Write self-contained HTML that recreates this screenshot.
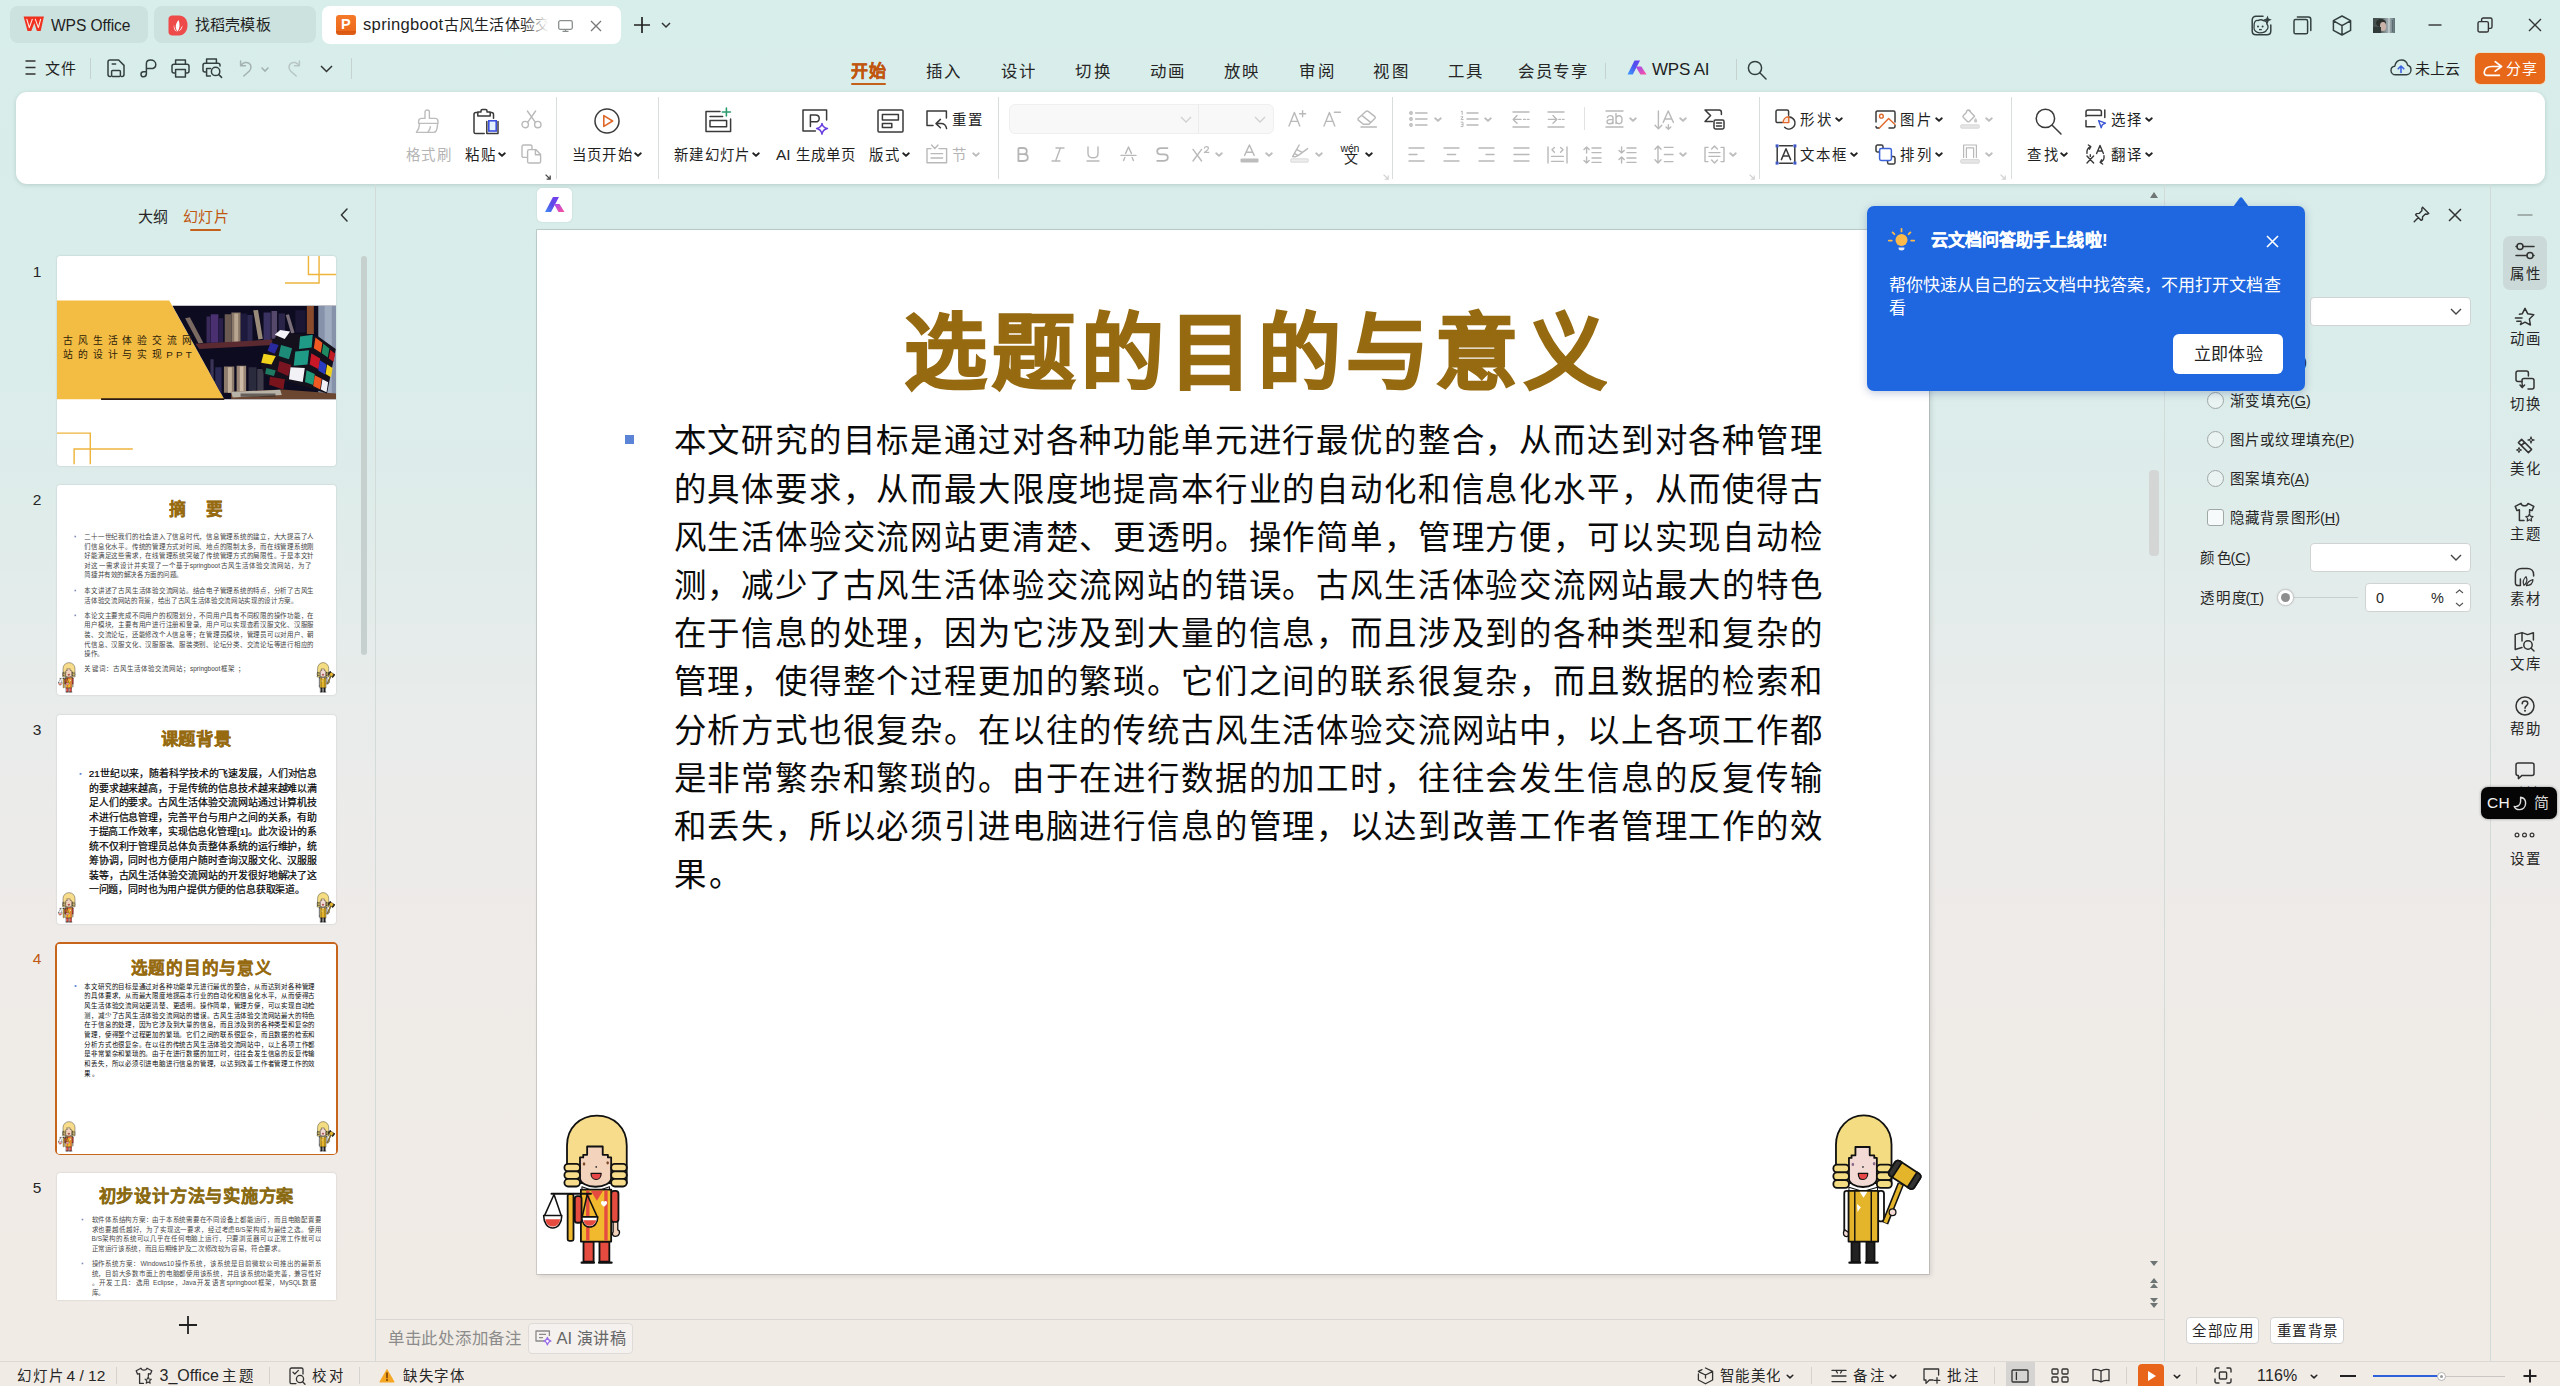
<!DOCTYPE html>
<html lang="zh-CN">
<head>
<meta charset="utf-8">
<title>springboot古风生活体验交流网站 - WPS Office</title>
<style>
*{box-sizing:border-box;margin:0;padding:0}
html,body{width:2560px;height:1386px;overflow:hidden}
body{font-family:"Liberation Sans",sans-serif;font-size:15px;color:#2a2a2a;position:relative;
background:linear-gradient(180deg,#d8eeeb 0%,#d9edea 22%,#deecea 36%,#e8eceb 50%,#edebe9 62%,#f0ebe6 85%,#f1ebe5 100%)}
.a{position:absolute}
.t{position:absolute;white-space:nowrap;line-height:1;overflow:visible}
.j{position:absolute;white-space:nowrap;overflow:hidden;text-align:justify;text-align-last:justify;text-justify:inter-character;line-height:1.2}
svg{position:absolute;overflow:visible}
.s{fill:none;stroke:#333;stroke-width:1.5;stroke-linecap:round;stroke-linejoin:round}
.g{fill:none;stroke:#b9b9b9;stroke-width:1.4;stroke-linecap:round;stroke-linejoin:round}
.sep{position:absolute;width:1px;background:#d9dddc}
.bt{left:136.5px;width:1148.5px;font-size:32.45px;line-height:48px;color:#0a0a0a}
.mt{top:59.5px;width:34.5px;font-size:16.45px;color:#262626;line-height:23px}
.th{left:57px;width:278.8px;height:209.5px;background:#fff;border-radius:3px;overflow:hidden;box-shadow:0 0 2px rgba(0,0,0,.18)}
.sl{position:absolute;left:0;top:0;width:1391px;height:1044px;transform:scale(.2006);transform-origin:0 0}
.tn{font-size:15.5px;color:#262626;width:10px;text-align:center;line-height:18px}
.t2{left:137px;width:1143px;font-size:32.45px;line-height:48px;color:#444}
.b2{left:87px;width:8px;height:8px;background:#7d8db5}
.t3{left:158px;width:1139px;font-size:49.45px;line-height:72px;color:#050505;font-weight:500;-webkit-text-stroke:1.1px #050505}
.t5{left:172px;width:1144px;font-size:32.45px;line-height:48px;color:#484848}
.cb{width:160.5px;height:28.5px;background:#fff;border:1px solid #cfd4d3;border-radius:4px}
.rd{width:17px;height:17px;border-radius:50%;background:rgba(255,255,255,.4);border:1.4px solid #a0a8a6}
.rp{font-size:14.45px;color:#262626;line-height:20px}
.bn{height:27px;background:#fff;border:1px solid #d2d2d2;border-radius:4px}
.sb{left:2510px;width:30px;font-size:14.45px;color:#262626;line-height:20px}
.st{top:1366px;font-size:14.45px;color:#262626;line-height:20px}
.cv{width:8px;height:5px}
.cv path{fill:none;stroke:#222;stroke-width:1.9;stroke-linecap:round;stroke-linejoin:round}
.cv.d path{stroke:#bdbdbd}
.rl{font-size:14.45px;color:#1f1f1f;line-height:20px}
.rl.d{color:#b4b4b4}
.d2{stroke:#3a3a3a!important}
</style>
</head>
<body>
<svg width="0" height="0" style="position:absolute;left:-10px;top:-10px"><defs>
<symbol id="ch1" viewBox="54 0 870 1386">
<g stroke="#111" stroke-width="14" stroke-linejoin="round" stroke-linecap="round">
<path d="M285 640 V350 C285 215 385 120 515 120 C645 120 745 215 745 350 V640Z" fill="#f6dc8b"/>
<path d="M440 358 H560 V422 H600 V442 H625 V600 C625 640 570 668 505 668 C440 668 385 640 385 600 V442 H410 V422 H440Z" fill="#f4d3bd"/>
<rect x="265" y="492" width="120" height="58" rx="28" fill="#f6dc8b"/><rect x="265" y="550" width="120" height="58" rx="28" fill="#f6dc8b"/><rect x="265" y="608" width="120" height="58" rx="28" fill="#f6dc8b"/>
<rect x="625" y="492" width="120" height="58" rx="28" fill="#f6dc8b"/><rect x="625" y="550" width="120" height="58" rx="28" fill="#f6dc8b"/><rect x="625" y="608" width="120" height="58" rx="28" fill="#f6dc8b"/>
<path d="M400 668 L505 705 L612 668 V695 H400Z" fill="#fff" stroke-width="8"/>
<rect x="625" y="700" width="56" height="240" rx="22" fill="#e54b3f"/>
<path d="M640 940 H676 V1000 C700 1010 690 1050 655 1050 C635 1050 630 1030 640 1015Z" fill="#f4d3bd" stroke-width="10"/>
<rect x="392" y="690" width="233" height="400" fill="#f0b92e"/>
<rect x="345" y="740" width="52" height="205" rx="20" fill="#e54b3f"/>
<rect x="412" y="1092" width="78" height="153" fill="#e54b3f"/><rect x="535" y="1092" width="76" height="153" fill="#e54b3f"/>
<path d="M398 1252 H492 M532 1252 H628" stroke-width="18"/>
<rect x="290" y="725" width="45" height="360" rx="12" fill="#f0b92e"/>
</g>
<rect x="432" y="698" width="26" height="385" fill="#e54b3f"/><rect x="572" y="698" width="26" height="385" fill="#e54b3f"/>
<path d="M468 698 H562 L515 775Z" fill="#e54b3f"/>
<path d="M570 822 C548 806 540 790 552 780 C560 774 568 778 570 786 C572 778 580 774 588 780 C600 790 592 806 570 822Z" fill="#fff"/>
<g stroke="#111" stroke-width="12" stroke-linejoin="round" stroke-linecap="round" fill="none">
<path d="M165 722 H470" stroke-width="14"/>
<path d="M185 728 L112 890 M185 728 L240 890 M440 728 L402 900 M440 728 L518 900"/>
<path d="M105 890 H245 C245 945 215 985 175 985 C135 985 105 945 105 890Z" fill="#fff"/>
<path d="M398 900 H522 C522 945 495 978 460 978 C425 978 398 945 398 900Z" fill="#fff"/>
</g>
<path d="M118 918 H232 C226 955 205 974 175 974 C145 974 124 955 118 918Z" fill="#e54b3f"/>
<path d="M410 925 H510 C504 952 486 968 460 968 C434 968 416 952 410 925Z" fill="#e54b3f"/>
<ellipse cx="416" cy="492" rx="10" ry="12" fill="#7a4a2a"/><ellipse cx="598" cy="484" rx="10" ry="12" fill="#7a4a2a"/><circle cx="510" cy="515" r="7" fill="#333"/>
<path d="M470 565 H548 C548 595 530 612 509 612 C488 612 470 595 470 565Z" fill="#e8474a" stroke="#111" stroke-width="9" stroke-linejoin="round"/>
</symbol>
<symbol id="ch2" viewBox="0 0 909 1386">
<g stroke="#111" stroke-width="14" stroke-linejoin="round" stroke-linecap="round">
<path d="M200 640 V345 C200 215 295 118 414 118 C533 118 628 215 628 345 V640Z" fill="#f3dc82"/>
<path d="M350 362 H460 V426 H495 V446 H515 V605 C515 640 470 670 408 670 C346 670 300 640 300 605 V446 H320 V426 H350Z" fill="#f3dad4"/>
<rect x="180" y="497" width="120" height="60" rx="28" fill="#f3dc82"/><rect x="180" y="557" width="120" height="60" rx="28" fill="#f3dc82"/><rect x="180" y="617" width="120" height="60" rx="28" fill="#f3dc82"/>
<rect x="515" y="497" width="115" height="60" rx="28" fill="#f3dc82"/><rect x="515" y="557" width="115" height="60" rx="28" fill="#f3dc82"/><rect x="515" y="617" width="115" height="60" rx="28" fill="#f3dc82"/>
<path d="M300 672 L408 705 L520 672 V700 H300Z" fill="#fff" stroke-width="8"/>
<rect x="264" y="700" width="40" height="345" rx="18" fill="#fff"/>
<path d="M268 1000 C250 1020 256 1052 282 1052 C296 1052 300 1040 298 1020Z" fill="#f3dad4" stroke-width="10"/>
<rect x="522" y="700" width="48" height="235" rx="20" fill="#fff"/>
<path d="M578 950 L700 645" stroke-width="52" stroke-linecap="butt"/>
<path d="M580 944 L698 651" stroke="#e4b42b" stroke-width="28" stroke-linecap="butt"/>
<circle cx="636" cy="865" r="26" fill="#f3dad4" stroke-width="10"/>
<g transform="rotate(33 730 575)"><rect x="615" y="508" width="230" height="136" rx="26" fill="#e4b42b"/><path d="M641 508 H660 V644 H641 C627 644 615 632 615 618 V534 C615 520 627 508 641 508Z M819 508 H800 V644 H819 C833 644 845 632 845 618 V534 C845 520 833 508 819 508Z" fill="#333"/></g>
<rect x="297" y="700" width="228" height="390" fill="#e4b42b"/>
<path d="M345 706 V1086 M472 706 V1086" stroke-width="11"/>
<rect x="320" y="1092" width="62" height="156" fill="#222"/><rect x="435" y="1092" width="62" height="156" fill="#222"/>
<path d="M304 1252 H386 M430 1252 H520" stroke-width="18"/>
</g>
<path d="M383 706 H442 L412 752Z" fill="#fff"/><path d="M362 800 L392 826 L366 862Z" fill="#fff"/>
<ellipse cx="330" cy="496" rx="10" ry="12" fill="#8a6a8a"/><ellipse cx="494" cy="490" rx="10" ry="12" fill="#8a6a8a"/><circle cx="408" cy="515" r="7" fill="#333"/>
<path d="M372 565 H445 C445 595 428 612 408 612 C388 612 372 595 372 565Z" fill="#e8474a" stroke="#111" stroke-width="9" stroke-linejoin="round"/>
</symbol>
</defs></svg>

<!-- title bar tabs -->
<div class="a" style="left:10px;top:6px;width:138px;height:37px;border-radius:8px;background:#cce2df"></div>
<svg width="22" height="16" viewBox="0 0 22 16" style="left:23px;top:16px"><path d="M0.6 0.5 H20.9 L17.7 14.9 H13.9 L11.3 6.9 L8.3 14.9 H4.5Z" fill="#f0311f"/><path d="M3.7 2.9 L6.3 11.6 L9.4 2.9 M12.2 2.9 L15.4 11.6 L17.7 2.9" fill="none" stroke="#ffe9e4" stroke-width="1.1" stroke-linejoin="round"/></svg>
<div class="t" style="left:51px;top:16px;font-size:15.6px;color:#1f1f1f;letter-spacing:-0.1px;line-height:20px">WPS Office</div>
<div class="a" style="left:154px;top:6px;width:162px;height:37px;border-radius:8px;background:#cce2df"></div>
<svg width="20" height="21" viewBox="0 0 20 21" style="left:168px;top:15px"><path d="M4.5 0.5 H11 C16 0.5 19.5 4.5 19.5 10 C19.5 16 16 20.5 11 20.5 H4.5 C2 20.5 0.5 19 0.5 17 V4 C0.5 2 2 0.5 4.5 0.5Z" fill="#ee4a4a"/><path d="M9.6 16.5 C7 13 7.2 9 10.6 5 C12 9 12 13 9.6 16.5Z M6 9.5 C6 12.5 7 14.8 9 16.6 C6.6 15.8 5.2 13.2 6 9.5Z M14.6 10.2 C14.2 13.4 12.8 15.4 10.4 16.6 C12 14.8 13.2 12.8 14.6 10.2Z" fill="#fff"/></svg>
<div class="j" style="left:195px;top:15px;width:75.5px;font-size:15px;color:#1f1f1f;line-height:20px">找稻壳模板</div>
<div class="a" style="left:322px;top:6px;width:299px;height:38px;border-radius:8px;background:#fff"></div>
<div class="a" style="left:336px;top:15px;width:20px;height:20px;border-radius:3px;background:linear-gradient(180deg,#f5792a 0%,#ee6a1c 78%,#d9560f 79%,#e0601a 100%)"></div>
<div class="t" style="left:341px;top:17px;font-size:14.5px;font-weight:bold;color:#fff;line-height:15px">P</div>
<div class="a" style="left:363px;top:15px;width:190px;height:20px;overflow:hidden">
<div class="t" style="left:0;top:0;font-size:16.6px;color:#1f1f1f;line-height:20px;letter-spacing:0.3px">springboot</div>
<div class="j" style="left:81px;top:0;width:136px;font-size:15px;color:#1f1f1f;line-height:20px">古风生活体验交流网</div>
<div class="a" style="left:160px;top:0;width:30px;height:20px;background:linear-gradient(90deg,rgba(255,255,255,0),#fff 85%)"></div>
</div>
<svg width="15" height="12" viewBox="0 0 15 12" style="left:557.5px;top:19.5px"><rect x="0.7" y="0.7" width="13.6" height="8.6" rx="1.5" fill="none" stroke="#8a8f8e" stroke-width="1.3"/><path d="M4.5 11.3 H10.5 M7.5 9.5 V11" stroke="#8a8f8e" stroke-width="1.3" fill="none"/></svg>
<svg width="12" height="12" viewBox="0 0 12 12" style="left:590px;top:19.5px"><path d="M1 1 L11 11 M11 1 L1 11" stroke="#777" stroke-width="1.3" fill="none"/></svg>
<svg width="18" height="18" viewBox="0 0 18 18" style="left:632.5px;top:16px"><path d="M9 1 V17 M1 9 H17" stroke="#222" stroke-width="1.7" fill="none"/></svg>
<svg width="10" height="6" viewBox="0 0 10 6" style="left:660.5px;top:22px"><path d="M1 1 L5 5 L9 1" stroke="#333" stroke-width="1.5" fill="none"/></svg>
<!-- window controls -->
<svg width="22" height="21" viewBox="0 0 22 21" style="left:2251px;top:15px"><path class="s" d="M12 1.2 H5 C2.8 1.2 1.2 2.8 1.2 5 V16 C1.2 18.2 2.8 19.8 5 19.8 H16 C18.2 19.8 19.8 18.2 19.8 16 V10" style="stroke:#34403f"/><path d="M16.5 0.5 L17.6 3.6 L20.8 4.8 L17.6 6 L16.5 9.2 L15.4 6 L12.2 4.8 L15.4 3.6Z" fill="#34403f"/><path class="s" d="M3.2 9 C3.2 6.5 5 5 7 5.6 C8.6 4.6 11 4.6 12.6 5.8 C14.6 5.4 16 7 15.8 9 C17.6 10.6 17.4 13.6 15.6 15 C14.4 17.6 10.6 17.8 8.8 17.8 C5.4 17.8 2.8 15.6 3 12.6Z" style="stroke:#34403f;stroke-width:1.3"/><circle cx="7" cy="11.6" r="1" fill="#34403f"/><circle cx="11.6" cy="11.6" r="1" fill="#34403f"/><path d="M8 14.6 H10.8" stroke="#34403f" stroke-width="1.3" fill="none"/></svg>
<svg width="19" height="19" viewBox="0 0 19 19" style="left:2292.5px;top:15.5px"><rect class="s" x="1" y="3.6" width="13.6" height="14.2" rx="1.6" style="stroke:#34403f"/><path class="s" d="M4.4 1 H15.4 C16.8 1 17.8 2 17.8 3.4 V14.6" style="stroke:#34403f"/></svg>
<svg width="20" height="21" viewBox="0 0 20 21" style="left:2332px;top:14.5px"><path class="s" d="M10 1 L18.6 5.6 V15.4 L10 20 L1.4 15.4 V5.6Z M1.6 5.8 L10 10.6 L18.4 5.8 M10 10.6 V19.8" style="stroke:#34403f"/></svg>
<div class="a" style="left:2372.8px;top:18.2px;width:22px;height:14.5px;overflow:hidden;background:linear-gradient(90deg,#414e4b 0%,#485552 28%,#66716f 42%,#8b979a 58%,#a4b0b4 72%,#7b8b90 88%,#5f7075 100%)">
<div class="a" style="left:3.5px;top:0.5px;width:10px;height:8px;border-radius:50%;background:#2b302d"></div>
<div class="a" style="left:7px;top:3.5px;width:6.5px;height:9px;border-radius:45%;background:#cbb2a9"></div>
<div class="a" style="left:0;top:9px;width:8px;height:6px;background:#2f3a38"></div>
<div class="a" style="left:15px;top:0;width:2px;height:14.5px;background:#c3cdd0;opacity:.7"></div>
<div class="a" style="left:19px;top:2px;width:1.5px;height:12px;background:#55656a;opacity:.8"></div>
</div>
<svg width="14" height="2" viewBox="0 0 14 2" style="left:2428px;top:23.5px"><path d="M0.5 1 H13.5" stroke="#333" stroke-width="1.4" fill="none"/></svg>
<svg width="16" height="16" viewBox="0 0 16 16" style="left:2476.5px;top:17px"><rect class="s" x="1" y="4.6" width="10.4" height="10.4" rx="1.6" style="stroke:#333;stroke-width:1.4"/><path class="s" d="M4.6 4.4 V2.6 C4.6 1.7 5.3 1 6.2 1 H13.4 C14.3 1 15 1.7 15 2.6 V9.8 C15 10.7 14.3 11.4 13.4 11.4 H11.6" style="stroke:#333;stroke-width:1.4"/></svg>
<svg width="14" height="14" viewBox="0 0 14 14" style="left:2528px;top:18.2px"><path d="M1 1 L13 13 M13 1 L1 13" stroke="#333" stroke-width="1.4" fill="none"/></svg>

<!-- menu row -->
<svg width="12" height="15" viewBox="0 0 12 15" style="left:24.5px;top:60px"><path d="M0.5 1 H10.5 M0.5 7.5 H10.5 M0.5 14 H10.5" stroke="#333" stroke-width="1.3" fill="none"/></svg>
<div class="j" style="left:45px;top:59px;width:30.5px;font-size:15px;color:#1f1f1f;line-height:20px">文件</div>
<div class="sep" style="left:90px;top:58px;height:21px;background:#c5d2d0"></div>
<svg width="18" height="19" viewBox="0 0 18 19" style="left:106.5px;top:58.5px"><path class="s" d="M3.6 17.6 H3 C1.8 17.6 1 16.8 1 15.6 V3 C1 1.8 1.8 1 3 1 H11.6 L17 6.4 V15.6 C17 16.8 16.2 17.6 15 17.6 H14.4 M5.2 5 H8.6" style="stroke:#34403f"/><rect class="s" x="4.6" y="11.6" width="8.8" height="6" rx="1" style="stroke:#34403f"/></svg>
<svg width="17" height="19" viewBox="0 0 17 19" style="left:139.5px;top:58.5px"><path class="s" d="M6.4 9.6 V4.6 C6.4 2.6 8 1 10.6 1 C13.6 1 15.8 2.8 15.8 5.4 C15.8 8 13.6 9.6 10.6 9.6 H6.4 M6.4 9.6 V14.6 C6.4 16.4 5.2 17.8 3.6 17.8 C2 17.8 1 16.6 1 15.2 C1 13.8 2 12.8 3.6 12.8 H6.4" style="stroke:#34403f"/></svg>
<svg width="19" height="19" viewBox="0 0 19 19" style="left:170.5px;top:58.5px"><path class="s" d="M4.6 5.2 V1 H14.4 V5.2 M4.4 14 H3 C1.8 14 1 13.2 1 12 V7.2 C1 6 1.8 5.2 3 5.2 H16 C17.2 5.2 18 6 18 7.2 V12 C18 13.2 17.2 14 16 14 H14.6 M4.6 10.6 H14.4 V18 H4.6Z" style="stroke:#34403f"/></svg>
<svg width="21" height="20" viewBox="0 0 21 20" style="left:201.5px;top:58px"><path class="s" d="M4.6 5.2 V1 H14.4 V5.2 M4.4 14 H3 C1.8 14 1 13.2 1 12 V7.2 C1 6 1.8 5.2 3 5.2 H16 C17.2 5.2 18 6 18 7.2 V8 M4.6 10.6 V18 H8.4 M4.6 10.6 H8.6" style="stroke:#34403f"/><circle class="s" cx="13.6" cy="13.4" r="4.2" style="stroke:#34403f"/><path class="s" d="M16.8 16.6 L19.6 19.4" style="stroke:#34403f"/></svg>
<svg width="14" height="18" viewBox="0 0 14 18" style="left:239px;top:59px"><path d="M1.6 2 V6.8 H6.4 M2 6.4 C4 3.4 7.4 2.6 9.8 4.2 C12.6 6 12.6 9.6 10.4 12 L4.8 17" fill="none" stroke="#a3b2b0" stroke-width="1.5" stroke-linecap="round" stroke-linejoin="round"/></svg>
<svg width="8" height="5" viewBox="0 0 8 5" style="left:261px;top:66.5px"><path d="M1 1 L4 4 L7 1" stroke="#a3b2b0" stroke-width="1.6" fill="none" stroke-linecap="round"/></svg>
<svg width="14" height="18" viewBox="0 0 14 18" style="left:287px;top:59px"><path d="M12.4 2 V6.8 H7.6 M12 6.4 C10 3.4 6.6 2.6 4.2 4.2 C1.4 6 1.4 9.6 3.6 12 L9.2 17" fill="none" stroke="#b7c5c3" stroke-width="1.5" stroke-linecap="round" stroke-linejoin="round"/></svg>
<svg width="13" height="8" viewBox="0 0 13 8" style="left:319.5px;top:65px"><path d="M1 1 L6.5 6.5 L12 1" stroke="#333" stroke-width="1.5" fill="none"/></svg>
<div class="sep" style="left:351px;top:58px;height:21px;background:#c5d2d0"></div>
<!-- tabs -->
<div class="j" style="left:851px;top:59.5px;width:35px;font-size:17px;font-weight:bold;color:#c0560f;line-height:23px;-webkit-text-stroke:.35px #c0560f">开始</div>
<div class="a" style="left:851px;top:82.5px;width:35px;height:2.5px;border-radius:1px;background:#c5601a"></div>
<div class="j mt" style="left:925.5px">插入</div>
<div class="j mt" style="left:1000.5px">设计</div>
<div class="j mt" style="left:1075px">切换</div>
<div class="j mt" style="left:1149.5px">动画</div>
<div class="j mt" style="left:1223.5px">放映</div>
<div class="j mt" style="left:1299px">审阅</div>
<div class="j mt" style="left:1373px">视图</div>
<div class="j mt" style="left:1447.5px">工具</div>
<div class="j mt" style="left:1518px;width:68.5px">会员专享</div>
<div class="sep" style="left:1605px;top:63px;height:16px;background:#c5d2d0"></div>
<svg width="20" height="15" viewBox="0 0 20 15" style="left:1626.5px;top:60px"><defs><linearGradient id="wa1" x1="0" y1="1" x2="1" y2="0"><stop offset="0" stop-color="#3aa0ff"/><stop offset=".55" stop-color="#4a55ee"/><stop offset="1" stop-color="#6a3df0"/></linearGradient><linearGradient id="wa2" x1="0" y1="0" x2="1" y2="1"><stop offset="0" stop-color="#9a4cf2"/><stop offset="1" stop-color="#ff4f9e"/></linearGradient></defs><path d="M0.5 14.5 L7.5 0.5 H13 L5.8 14.5Z" fill="url(#wa1)"/><path d="M8.6 6.6 H14.4 L19.5 14.5 H13.4Z" fill="url(#wa2)"/></svg>
<div class="t" style="left:1652px;top:58px;font-size:17px;color:#1f1f1f;line-height:23px;letter-spacing:-0.2px">WPS AI</div>
<div class="sep" style="left:1735.5px;top:59px;height:21px;background:#c5d2d0"></div>
<svg width="20" height="20" viewBox="0 0 20 20" style="left:1747px;top:59.5px"><circle class="s" cx="8" cy="8" r="6.6" style="stroke:#34403f"/><path class="s" d="M12.8 12.8 L19 19" style="stroke:#34403f"/></svg>
<!-- cloud + share -->
<svg width="22" height="17" viewBox="0 0 22 17" style="left:2389.5px;top:58.5px"><path class="s" d="M5.6 15.8 C2.8 15.8 1 13.8 1 11.4 C1 9 2.8 7.4 4.8 7.2 C5.4 3.6 8 1 11.4 1 C14.6 1 17 3.2 17.6 6.2 C19.8 6.8 21 8.6 21 10.8 C21 13.6 19 15.8 16.4 15.8Z" style="stroke:#34403f;stroke-width:1.4"/><path d="M11 13.4 V7.2 M8.2 9.8 L11 7 L13.8 9.8" stroke="#3d63e0" stroke-width="1.6" fill="none" stroke-linecap="round" stroke-linejoin="round"/></svg>
<div class="j" style="left:2414.5px;top:59px;width:45.5px;font-size:15px;color:#1f1f1f;line-height:20px">未上云</div>
<div class="a" style="left:2475px;top:52.5px;width:70px;height:31px;border-radius:5px;background:#e8681a;box-shadow:0 0 0 1px rgba(255,200,150,.35)"></div>
<svg width="20" height="17" viewBox="0 0 19 15" style="left:2483px;top:59.5px"><path d="M11.6 1 L17.6 5.6 L11.6 10 M17 5.6 H8.4 C4.4 5.6 1.6 7.6 1.2 11 C1 13 2.2 14 4 14 H15.6" stroke="#fff" stroke-width="1.6" fill="none" stroke-linecap="round" stroke-linejoin="round"/></svg>
<div class="j" style="left:2506px;top:59px;width:31px;font-size:15px;color:#fff;line-height:20px">分享</div>

<!-- ribbon -->
<div class="a" style="left:16px;top:92px;width:2528.5px;height:91.8px;border-radius:11px;background:#fff;box-shadow:0 1px 4px rgba(60,90,85,.22)"></div>
<!-- group: clipboard -->
<svg width="26" height="25" viewBox="0 0 26 25" style="left:414.5px;top:108.5px"><path class="g" d="M10 9.4 V3 C10 1.8 11 1 12.2 1 C13.6 1 14.4 1.8 14.4 3 V9.4 H20 C21.8 9.4 23 10.6 23 12.4 V14.4 H3.6 V12.4 C3.6 10.6 4.8 9.4 6.6 9.4Z M4.6 14.6 C4.4 18 3.4 21 1.4 23.4 H18.6 C21 23.4 22.4 20 22.6 14.6 M13 23 C14.4 21.4 15.2 19.6 15.4 17.6" style="stroke:#bdbdbd"/></svg>
<div class="j rl d" style="left:405.5px;top:145px;width:45.5px">格式刷</div>
<svg width="26" height="26" viewBox="0 0 26 26" style="left:473px;top:108.5px"><path class="s d2" d="M4.5 3.6 H3 C1.8 3.6 1 4.4 1 5.6 V23 C1 24 1.6 24.6 2.6 24.6 H11.2 M17.4 3.6 H18.6 C19.8 3.6 20.5 4.4 20.5 5.6 V9.2"/><path class="s d2" d="M4.8 3 H8 V1.8 C8 1 8.6 0.6 9.4 0.6 H12.6 C13.4 0.6 14 1 14 1.8 V3 H17.2 V7 H4.8Z"/><path class="s d2" d="M13.8 12.4 V24.6 H25 V12.4"/><rect x="15.8" y="11.8" width="7.4" height="10.2" fill="#e3f1ff" stroke="#3b4fe0" stroke-width="1.6"/></svg>
<div class="j rl" style="left:464.5px;top:145px;width:30.5px">粘贴</div>
<svg class="cv" viewBox="0 0 8 5" style="left:498px;top:152px"><path d="M1.2 1.3L4 3.9L6.8 1.3"/></svg>
<svg width="21" height="19" viewBox="0 0 21 19" style="left:520.5px;top:109.5px"><path class="g" d="M6.4 1 L14.4 12.4 M14.6 1 L6.6 12.4" /><circle class="g" cx="4.2" cy="14.6" r="3.2"/><circle class="g" cx="16.8" cy="14.6" r="3.2"/></svg>
<svg width="21" height="20" viewBox="0 0 21 20" style="left:520.5px;top:143.5px"><path class="g" d="M5.6 13.4 H2.6 C1.6 13.4 1 12.8 1 11.8 V2.6 C1 1.6 1.6 1 2.6 1 H9.4 C10.4 1 11 1.6 11 2.6 V5"/><path class="g" d="M8.2 5.6 H14.8 L19.6 10.4 V17.4 C19.6 18.4 19 19 18 19 H8.2 C7.2 19 6.6 18.4 6.6 17.4 V7.2 C6.6 6.2 7.2 5.6 8.2 5.6Z M14.4 5.8 V10.8 H19.4"/></svg>
<svg width="6" height="6" viewBox="0 0 6 6" style="left:544.5px;top:173.5px"><path d="M0.6 0.6 L5 5 M5.2 1.6 V5.2 H1.6" stroke="#4a4a4a" stroke-width="1.3" fill="none"/></svg>
<div class="sep" style="left:556px;top:97px;height:82px"></div>
<!-- group: slideshow -->
<svg width="26" height="26" viewBox="0 0 26 26" style="left:594px;top:107.5px"><circle class="s d2" cx="13" cy="13" r="12"/><path d="M9.8 7.6 L18.6 13 L9.8 18.4Z" fill="none" stroke="#e0682a" stroke-width="1.6" stroke-linejoin="round"/></svg>
<div class="j rl" style="left:571.5px;top:145px;width:60px">当页开始</div>
<svg class="cv" viewBox="0 0 8 5" style="left:634px;top:152px"><path d="M1.2 1.3L4 3.9L6.8 1.3"/></svg>
<div class="sep" style="left:658px;top:97px;height:82px"></div>
<!-- group: slides -->
<svg width="28" height="26" viewBox="0 0 28 26" style="left:704.5px;top:107px"><path class="s d2" d="M15 4.6 H1 V24.4 H25.6 V12"/><path class="s d2" d="M5 9.6 H17.6 M5 13.4 V19.8 H21.6 V13.4Z"/><path d="M21.4 1 V9 M17.4 5 H25.4" stroke="#2d9a6e" stroke-width="1.6" fill="none" stroke-linecap="round"/></svg>
<div class="j rl" style="left:674px;top:145px;width:75px">新建幻灯片</div>
<svg class="cv" viewBox="0 0 8 5" style="left:752px;top:152px"><path d="M1.2 1.3L4 3.9L6.8 1.3"/></svg>
<svg width="27" height="28" viewBox="0 0 27 28" style="left:802px;top:109px"><path class="s d2" d="M13.4 22 H1 V1 H24.6 V11"/><path class="s d2" d="M8.4 17.4 V6 H13.4 C15.8 6 17.2 7.4 17.2 9.4 C17.2 11.6 15.8 12.8 13.4 12.8 H8.4"/><path d="M20 14.4 C20.6 17.6 21.8 18.8 25.4 19.6 C21.8 20.4 20.6 21.6 20 25.2 C19.4 21.6 18.2 20.4 14.6 19.6 C18.2 18.8 19.4 17.6 20 14.4Z" fill="#fff" stroke="#6a3fe0" stroke-width="1.5" stroke-linejoin="round"/></svg>
<div class="t rl" style="left:776px;top:145px;font-size:15.5px">AI</div>
<div class="j rl" style="left:795.5px;top:145px;width:59.5px">生成单页</div>
<svg width="27" height="24" viewBox="0 0 27 24" style="left:876.5px;top:109px"><rect class="s d2" x="1" y="1" width="25" height="22" rx="1"/><rect class="s d2" x="5.4" y="5.6" width="16" height="5.4"/><rect class="s d2" x="5.4" y="14.4" width="9.4" height="4.2"/></svg>
<div class="j rl" style="left:868.5px;top:145px;width:30.5px">版式</div>
<svg class="cv" viewBox="0 0 8 5" style="left:902px;top:152px"><path d="M1.2 1.3L4 3.9L6.8 1.3"/></svg>
<svg width="22" height="20" viewBox="0 0 22 20" style="left:926px;top:109.5px"><path class="s d2" d="M7 15.6 H1 V1 H20.4 V8"/><path class="s d2" d="M14.4 9.4 L10 13.6 L14.4 17.8 M10.4 13.6 H15 C18 13.6 20 15.4 20.6 18.6"/></svg>
<div class="j rl" style="left:951.5px;top:109.5px;width:30.5px">重置</div>
<svg width="22" height="20" viewBox="0 0 22 20" style="left:926px;top:143.5px"><path class="g" d="M5.6 1 L8.8 4.4 L12 1 M5 4.6 H1 V18.8 H20.6 V4.6 H13"/><path class="g" d="M5 9.6 H16.6 M5 14 H16.6"/></svg>
<div class="j rl d" style="left:952px;top:145px;width:15px">节</div>
<svg class="cv d" viewBox="0 0 8 5" style="left:972px;top:152px"><path d="M1.2 1.3L4 3.9L6.8 1.3"/></svg>
<div class="sep" style="left:998px;top:97px;height:82px"></div>
<!-- group: font -->
<div class="a" style="left:1008.5px;top:104px;width:265px;height:30px;border-radius:6px;background:#f8f8f8;border:1px solid #efefef"></div>
<div class="a" style="left:1197.5px;top:105px;width:1px;height:28px;background:#ececec"></div>
<svg width="12" height="7" viewBox="0 0 12 7" style="left:1180px;top:115.5px"><path d="M1 1 L6 6 L11 1" stroke="#d0d0d0" stroke-width="1.3" fill="none"/></svg>
<svg width="12" height="7" viewBox="0 0 12 7" style="left:1254px;top:115.5px"><path d="M1 1 L6 6 L11 1" stroke="#d0d0d0" stroke-width="1.3" fill="none"/></svg>
<svg width="19" height="17" viewBox="0 0 19 17" style="left:1287.5px;top:110px"><path class="g" d="M1 16 L6.4 2.4 L11.8 16 M3 11.4 H9.8 M14.6 0.8 V6.8 M11.6 3.8 H17.6"/></svg>
<svg width="19" height="17" viewBox="0 0 19 17" style="left:1322.5px;top:110px"><path class="g" d="M1 16 L6.4 2.4 L11.8 16 M3 11.4 H9.8 M11.4 2.2 H17.4"/></svg>
<svg width="22" height="18" viewBox="0 0 22 18" style="left:1355.5px;top:110px"><path class="g" d="M12.2 1.4 L18.6 6.4 C19.4 7 19.4 8 18.8 8.6 L13 14.2 H7.4 L2.6 10.4 C1.8 9.8 1.8 8.8 2.4 8.2 L9.8 1.4 C10.6 0.8 11.4 0.8 12.2 1.4Z M5.8 5.4 L14.6 12.4 M5 17 H20.4"/></svg>
<svg width="12" height="15" viewBox="0 0 12 15" style="left:1016.5px;top:146.5px"><path d="M1.4 1 H6 C8.4 1 9.8 2.2 9.8 4.2 C9.8 6.2 8.4 7.2 6 7.2 H1.4 M1.4 7.2 H6.8 C9.2 7.2 10.8 8.4 10.8 10.6 C10.8 12.8 9.2 14 6.8 14 H1.4 V1" stroke="#b5b5b5" stroke-width="1.8" fill="none" stroke-linejoin="round"/></svg>
<svg width="14" height="15" viewBox="0 0 14 15" style="left:1050.5px;top:146.5px"><path class="g" d="M5 1 H13 M1 14 H9 M9.4 1 L4.6 14"/></svg>
<svg width="14" height="16" viewBox="0 0 14 16" style="left:1086px;top:146px"><path class="g" d="M2 1 V7.4 C2 10.2 4 11.8 7 11.8 C10 11.8 12 10.2 12 7.4 V1 M1 15 H13"/></svg>
<svg width="17" height="16" viewBox="0 0 17 16" style="left:1119.5px;top:146px"><path class="g" d="M3.6 14.6 L4.8 11.4 M12.2 11.4 L13.4 14.6 M5.6 7.4 L8.5 1 L11.4 7.4 M1 9.4 H16"/></svg>
<svg width="13" height="15" viewBox="0 0 13 15" style="left:1155.5px;top:146.5px"><path d="M11.4 1.2 H5 C2.6 1.2 1.2 2.4 1.2 4.2 C1.2 6.2 2.6 7.4 5 7.4 H8 C10.4 7.4 11.8 8.6 11.8 10.6 C11.8 12.6 10.4 13.8 8 13.8 H1.2" stroke="#b5b5b5" stroke-width="1.8" fill="none" stroke-linecap="round"/></svg>
<svg width="18" height="16" viewBox="0 0 18 16" style="left:1191.5px;top:145.5px"><path class="g" d="M1 3.4 L9.6 15 M9.6 3.4 L1 15"/><path class="g" d="M12.4 2.2 C12.6 1.2 13.4 0.7 14.4 0.7 C15.6 0.7 16.4 1.4 16.4 2.4 C16.4 3.6 15 4.4 12.4 6.4 H16.8" style="stroke-width:1.2"/></svg>
<svg class="cv d" viewBox="0 0 8 5" style="left:1215px;top:152px"><path d="M1.2 1.3L4 3.9L6.8 1.3"/></svg>
<svg width="19" height="19" viewBox="0 0 19 19" style="left:1240px;top:143.5px"><path class="g" d="M4.6 11.4 L9.4 1 L14.2 11.4 M6 8.2 H12.8"/><rect x="0.5" y="14.6" width="18" height="3.8" rx="1" fill="#bcbcbc"/></svg>
<svg class="cv d" viewBox="0 0 8 5" style="left:1265px;top:152px"><path d="M1.2 1.3L4 3.9L6.8 1.3"/></svg>
<svg width="19" height="19" viewBox="0 0 19 19" style="left:1289.5px;top:143.5px"><path class="g" d="M9.2 1 L4.4 9.4 L8 11.6 L17.6 4.6 M4.4 9.4 L2.6 12.6 L5 12.8 L8 11.6 M6.8 5.6 L12.4 8.4"/><rect x="0.7" y="14.8" width="17.6" height="3.4" rx="1" fill="#ededed" stroke="#d4d4d4" stroke-width=".8"/></svg>
<svg class="cv d" viewBox="0 0 8 5" style="left:1315px;top:152px"><path d="M1.2 1.3L4 3.9L6.8 1.3"/></svg>
<div class="t" style="left:1340.5px;top:142.5px;font-size:10.5px;color:#222;line-height:11px;letter-spacing:-.2px">wén</div>
<div class="t" style="left:1343.5px;top:151px;font-size:14px;color:#222;line-height:14px;width:14px;overflow:hidden">文</div>
<svg class="cv" viewBox="0 0 8 5" style="left:1365px;top:152px"><path d="M1.2 1.3L4 3.9L6.8 1.3"/></svg>
<svg width="6" height="6" viewBox="0 0 6 6" style="left:1382.5px;top:173.5px"><path d="M0.6 0.6 L5 5 M5.2 1.6 V5.2 H1.6" stroke="#cfcfcf" stroke-width="1.1" fill="none"/></svg>
<div class="sep" style="left:1392px;top:97px;height:82px"></div>
<!-- group: paragraph -->
<svg width="19" height="16" viewBox="0 0 19 16" style="left:1409px;top:111px"><circle class="g" cx="2" cy="2" r="1.2"/><circle class="g" cx="2" cy="8" r="1.2"/><circle class="g" cx="2" cy="14" r="1.2"/><path class="g" d="M6.6 2 H18 M6.6 8 H18 M6.6 14 H18"/></svg>
<svg class="cv d" viewBox="0 0 8 5" style="left:1434px;top:117px"><path d="M1.2 1.3L4 3.9L6.8 1.3"/></svg>
<svg width="19" height="18" viewBox="0 0 19 18" style="left:1459.5px;top:110px"><path class="g" d="M1.2 1.6 L2.2 1 V4.4 M1 6.8 H3 L1 9.6 H3.2 M1 12.2 H3 V14.4 H1.6 M3 14.4 V16.6 H1" style="stroke-width:1"/><path class="g" d="M7 3 H18 M7 9 H18 M7 15 H18"/></svg>
<svg class="cv d" viewBox="0 0 8 5" style="left:1484px;top:117px"><path d="M1.2 1.3L4 3.9L6.8 1.3"/></svg>
<svg width="18" height="17" viewBox="0 0 18 17" style="left:1512px;top:111px"><path class="g" d="M1 1 H17 M1 16 H17 M1.4 8.4 H9 M11.6 8.4 H13.4 M15.4 8.4 H17 M5 4.6 L1.2 8.4 L5 12.2"/></svg>
<svg width="18" height="17" viewBox="0 0 18 17" style="left:1547px;top:111px"><path class="g" d="M1 1 H17 M1 16 H17 M1.4 8.4 H9.6 M11.8 8.4 H13.6 M15.6 8.4 H17 M6 4.6 L9.8 8.4 L6 12.2"/></svg>
<div class="sep" style="left:1584px;top:107px;height:23px;background:#e2e2e2"></div>
<svg width="19" height="18" viewBox="0 0 19 18" style="left:1604.5px;top:110px"><path class="g" d="M1 1 H18 M1 17 H18"/><path class="g" d="M2.4 7.4 C3 6 4.2 5.6 5.4 5.6 C7 5.6 8 6.4 8 8 V13.6 M8 9.6 H5 C3.2 9.6 2 10.4 2 11.8 C2 13 3 13.8 4.6 13.8 C6.4 13.8 8 12.8 8 11"/><path class="g" d="M11 3.4 V13.6 M11 9.6 C11 7.2 12.2 5.8 14 5.8 C15.8 5.8 17 7.2 17 9.6 C17 12.2 15.8 13.8 14 13.8 C12.2 13.8 11 12.2 11 9.6"/></svg>
<svg class="cv d" viewBox="0 0 8 5" style="left:1629px;top:117px"><path d="M1.2 1.3L4 3.9L6.8 1.3"/></svg>
<svg width="21" height="20" viewBox="0 0 21 20" style="left:1653.5px;top:109.5px"><path class="g" d="M4.4 1 V18.6 M1 15.2 L4.4 18.8 L7.8 15.2 M9.2 12.4 L14.2 1 L19.4 12.4 M10.8 9 H17.8 M14.4 14.6 V19 M12 17 L14.4 19.2 L16.8 17"/></svg>
<svg class="cv d" viewBox="0 0 8 5" style="left:1679px;top:117px"><path d="M1.2 1.3L4 3.9L6.8 1.3"/></svg>
<svg width="21" height="21" viewBox="0 0 21 21" style="left:1703.5px;top:108.5px"><path class="s d2" d="M17.4 5.6 V3.4 C17.4 2 16.6 1 15.2 1 H1 L6.6 6.6 L1 12.4 H8.4"/><rect class="s d2" x="10" y="11" width="10" height="9" rx="1.4"/><path class="s d2" d="M12.4 14 H17.6 M12.4 17 H17.6" style="stroke-width:1.3"/></svg>
<svg width="17" height="15" viewBox="0 0 17 15" style="left:1408px;top:147px"><path class="g" d="M1 1 H16 M1 7.5 H9 M1 14 H16"/></svg>
<svg width="17" height="15" viewBox="0 0 17 15" style="left:1443px;top:147px"><path class="g" d="M1 1 H16 M4.4 7.5 H12.6 M1 14 H16"/></svg>
<svg width="17" height="15" viewBox="0 0 17 15" style="left:1478px;top:147px"><path class="g" d="M1 1 H16 M8 7.5 H16 M1 14 H16"/></svg>
<svg width="17" height="15" viewBox="0 0 17 15" style="left:1512.5px;top:147px"><path class="g" d="M1 1 H16 M1 7.5 H16 M1 14 H16"/></svg>
<svg width="21" height="18" viewBox="0 0 21 18" style="left:1547px;top:145.5px"><path class="g" d="M1 1 V17 M20 1 V17 M4.6 10.4 H16.4 M4.6 15.4 H16.4 M7.4 1.4 L5 3.8 L7.4 6.2 M13.6 1.4 L16 3.8 L13.6 6.2"/></svg>
<svg width="19" height="18" viewBox="0 0 19 18" style="left:1582.5px;top:145.5px"><path class="g" d="M3.6 1 V7 M1 3.4 L3.6 0.9 L6.2 3.4 M3.6 17 V11 M1 14.6 L3.6 17.1 L6.2 14.6 M9 2 H18 M9 6.6 H18 M9 12 H18 M9 16.4 H18"/></svg>
<svg width="19" height="18" viewBox="0 0 19 18" style="left:1617.5px;top:145.5px"><path class="g" d="M3.6 1 V7 M1 4.6 L3.6 7.1 L6.2 4.6 M3.6 17 V11 M1 13.4 L3.6 10.9 L6.2 13.4 M9 2 H18 M9 6.6 H18 M9 12 H18 M9 16.4 H18"/></svg>
<svg width="20" height="19" viewBox="0 0 20 19" style="left:1653.5px;top:145px"><path class="g" d="M4 1.2 V17.8 M1 4.2 L4 1 L7 4.2 M1 14.8 L4 18 L7 14.8 M10.4 2.4 H19 M10.4 9.5 H19 M10.4 16.6 H19"/></svg>
<svg class="cv d" viewBox="0 0 8 5" style="left:1679px;top:152px"><path d="M1.2 1.3L4 3.9L6.8 1.3"/></svg>
<svg width="21" height="19" viewBox="0 0 21 19" style="left:1703.5px;top:145px"><path class="g" d="M4 2.4 H1 V16.6 H4 M17 2.4 H20 V16.6 H17 M5 7.6 H16 M5 11.4 H16 M7.6 4 L10.5 1 L13.4 4 M7.6 15 L10.5 18 L13.4 15"/></svg>
<svg class="cv d" viewBox="0 0 8 5" style="left:1729px;top:152px"><path d="M1.2 1.3L4 3.9L6.8 1.3"/></svg>
<svg width="6" height="6" viewBox="0 0 6 6" style="left:1748.5px;top:173.5px"><path d="M0.6 0.6 L5 5 M5.2 1.6 V5.2 H1.6" stroke="#cfcfcf" stroke-width="1.1" fill="none"/></svg>
<div class="sep" style="left:1758.5px;top:97px;height:82px"></div>
<!-- group: drawing -->
<svg width="22" height="21" viewBox="0 0 22 21" style="left:1774.5px;top:108.5px"><path class="s d2" d="M7.4 13.6 H2.6 C1.6 13.6 1 13 1 12 V2.6 C1 1.6 1.6 1 2.6 1 H12 C13 1 13.6 1.6 13.6 2.6 V6.2"/><path class="s d2" d="M9.6 18.2 C11.4 20.2 14.6 20.6 17 19.2 C19.8 17.6 20.8 14.2 19.4 11.4 C18.4 9.4 16.6 8.2 14.4 8"/><path d="M13.8 7.8 C10.6 7.8 8.2 10.2 8 13.6 H13.8Z" fill="#fbe6dc" stroke="#e0682a" stroke-width="1.4" stroke-linejoin="round"/></svg>
<div class="j rl" style="left:1800px;top:109.5px;width:30.5px">形状</div>
<svg class="cv" viewBox="0 0 8 5" style="left:1835px;top:117px"><path d="M1.2 1.3L4 3.9L6.8 1.3"/></svg>
<svg width="21" height="19" viewBox="0 0 21 19" style="left:1874.5px;top:109.5px"><path class="s d2" d="M1 12 V2.4 C1 1.6 1.6 1 2.4 1 H18.6 C19.4 1 20 1.6 20 2.4 V12 M4 18 H2.4 C1.6 18 1 17.4 1 16.6 M14 18 H18.6 C19.4 18 20 17.4 20 16.6 V15.4"/><circle cx="6.4" cy="6.2" r="1.9" fill="none" stroke="#e0682a" stroke-width="1.4"/><path d="M4.4 18 L13.6 8.6 L20 14.6" fill="none" stroke="#e0682a" stroke-width="1.4" stroke-linejoin="round" stroke-linecap="round"/></svg>
<div class="j rl" style="left:1900px;top:109.5px;width:30.5px">图片</div>
<svg class="cv" viewBox="0 0 8 5" style="left:1934.5px;top:117px"><path d="M1.2 1.3L4 3.9L6.8 1.3"/></svg>
<svg width="20" height="20" viewBox="0 0 20 20" style="left:1959.5px;top:108.5px"><path class="g" d="M6.4 3.6 L3.4 6.6 C2.8 7.2 2.8 8 3.4 8.6 L7.4 12.4 C8 13 8.8 13 9.4 12.4 L14.6 7.2 L9 1.6 M6.4 3.6 C6.4 2 7.2 1 8.4 1 C9.6 1 10.4 2 10.4 3"/><path d="M15.6 8.8 C16.6 10.2 17.2 11.2 17.2 12 C17.2 13 16.5 13.6 15.6 13.6 C14.7 13.6 14 13 14 12 C14 11.2 14.6 10.2 15.6 8.8Z" fill="#c9c9c9"/><rect x="0.7" y="15.8" width="18.6" height="3.4" rx="1" fill="#e6e6e6" stroke="#d0d0d0" stroke-width=".8"/></svg>
<svg class="cv d" viewBox="0 0 8 5" style="left:1984.5px;top:117px"><path d="M1.2 1.3L4 3.9L6.8 1.3"/></svg>
<svg width="22" height="21" viewBox="0 0 22 21" style="left:1774.5px;top:143.5px"><path class="s d2" d="M2.2 3.6 V17.4 M19.8 3.6 V17.4 M4.6 1.8 H17.4 M4.6 19.2 H17.4"/><path class="s d2" d="M6.4 15.6 L11 4.8 L15.6 15.6 M8 12 H14"/><rect x="0.6" y="0.4" width="3" height="3" fill="#3d57c8"/><rect x="18.4" y="0.4" width="3" height="3" fill="#3d57c8"/><rect x="0.6" y="17.6" width="3" height="3" fill="#3d57c8"/><rect x="18.4" y="17.6" width="3" height="3" fill="#3d57c8"/></svg>
<div class="j rl" style="left:1800px;top:144.5px;width:45.5px">文本框</div>
<svg class="cv" viewBox="0 0 8 5" style="left:1850px;top:152px"><path d="M1.2 1.3L4 3.9L6.8 1.3"/></svg>
<svg width="21" height="21" viewBox="0 0 21 21" style="left:1874.5px;top:143.5px"><path class="s d2" d="M4.4 8 H2.6 C1.6 8 1 7.4 1 6.4 V2.6 C1 1.6 1.6 1 2.6 1 H6.4 C7.4 1 8 1.6 8 2.6 V4.4"/><path class="s d2" d="M16.4 12.6 H18.4 C19.4 12.6 20 13.2 20 14.2 V18.4 C20 19.4 19.4 20 18.4 20 H14.2 C13.2 20 12.6 19.4 12.6 18.4 V16.4"/><rect x="4.6" y="4.6" width="11.8" height="11.8" rx="1.6" fill="#fff" stroke="#3d63d8" stroke-width="1.5"/></svg>
<div class="j rl" style="left:1900px;top:144.5px;width:30.5px">排列</div>
<svg class="cv" viewBox="0 0 8 5" style="left:1934.5px;top:152px"><path d="M1.2 1.3L4 3.9L6.8 1.3"/></svg>
<svg width="20" height="20" viewBox="0 0 20 20" style="left:1959.5px;top:144px"><path class="g" d="M3.6 13.4 V1 H16.4 V13.4 M6.4 13.4 V3.8 H13.6 V13.4" style="stroke-width:1.2"/><rect x="0.7" y="15.6" width="18.6" height="3.6" rx="1" fill="#e6e6e6" stroke="#d0d0d0" stroke-width=".8"/></svg>
<svg class="cv d" viewBox="0 0 8 5" style="left:1984.5px;top:152px"><path d="M1.2 1.3L4 3.9L6.8 1.3"/></svg>
<svg width="6" height="6" viewBox="0 0 6 6" style="left:2000px;top:173.5px"><path d="M0.6 0.6 L5 5 M5.2 1.6 V5.2 H1.6" stroke="#cfcfcf" stroke-width="1.1" fill="none"/></svg>
<div class="sep" style="left:2010.5px;top:97px;height:82px"></div>
<!-- group: find -->
<svg width="27" height="27" viewBox="0 0 27 27" style="left:2034.5px;top:107.5px"><circle class="s d2" cx="10.4" cy="10.4" r="9.2"/><path class="s d2" d="M17.2 17.2 L26 26"/></svg>
<div class="j rl" style="left:2027px;top:144.5px;width:30.5px">查找</div>
<svg class="cv" viewBox="0 0 8 5" style="left:2060px;top:152px"><path d="M1.2 1.3L4 3.9L6.8 1.3"/></svg>
<svg width="22" height="21" viewBox="0 0 22 21" style="left:2084.5px;top:109px"><path class="s d2" d="M1 7.6 V3 C1 1.8 1.8 1 3 1 H14.4 C15.6 1 16.4 1.8 16.4 3 V6.4 H1 M19.8 1 V8.6 M1 11.4 V17.8 H10"/><path d="M13.6 11.6 L20.4 14.2 L17.4 15.6 L16.2 18.8Z" fill="#fff" stroke="#3d57d8" stroke-width="1.4" stroke-linejoin="round"/></svg>
<div class="j rl" style="left:2110.5px;top:109.5px;width:30.5px">选择</div>
<svg class="cv" viewBox="0 0 8 5" style="left:2145px;top:117px"><path d="M1.2 1.3L4 3.9L6.8 1.3"/></svg>
<svg width="21" height="21" viewBox="0 0 21 21" style="left:2085px;top:143.5px"><path class="s d2" d="M2 9.4 C1.6 6.4 2.8 3.8 5.6 2.6 M3.4 1 L5.8 2.6 L4.4 5.2 M19 11.6 C19.4 14.6 18.2 17.2 15.4 18.4 M17.6 20 L15.2 18.4 L16.6 15.8" style="stroke-width:1.4"/><path class="s d2" d="M11.6 9.6 L15 1.4 L18.4 9.6 M12.8 7 H17.2 M2 12 L8.6 19 M8.6 12 L2 19 M5.3 12.4 V10.8" style="stroke-width:1.4"/></svg>
<div class="j rl" style="left:2110.5px;top:144.5px;width:30.5px">翻译</div>
<svg class="cv" viewBox="0 0 8 5" style="left:2145px;top:152px"><path d="M1.2 1.3L4 3.9L6.8 1.3"/></svg>



<!-- left thumbnail panel -->
<div class="j" style="left:137.5px;top:206.5px;width:30.5px;font-size:15px;color:#262626;line-height:20px">大纲</div>
<div class="j" style="left:183px;top:206.5px;width:45.5px;font-size:15px;color:#c0560f;line-height:20px">幻灯片</div>
<div class="a" style="left:189.5px;top:229px;width:31.5px;height:2px;border-radius:1px;background:#c5601a"></div>
<svg width="8" height="14" viewBox="0 0 8 14" style="left:340px;top:208px"><path d="M7 1 L1.4 7 L7 13" stroke="#333" stroke-width="1.5" fill="none" stroke-linecap="round" stroke-linejoin="round"/></svg>
<div class="a" style="left:360.8px;top:256px;width:6.2px;height:399px;border-radius:3px;background:#c6d0cf"></div>
<div class="t tn" style="left:32px;top:262.5px">1</div>
<div class="t tn" style="left:32px;top:491px">2</div>
<div class="t tn" style="left:32px;top:721px">3</div>
<div class="t tn" style="left:32px;top:950px;color:#c0560f">4</div>
<div class="t tn" style="left:32px;top:1179px">5</div>
<div class="a th" style="top:256px"><div class="sl">
<svg width="1391" height="1038.5" viewBox="42 38 1760 1314" style="left:0;top:0">
<defs><clipPath id="phc"><path d="M770 352 H1802 V942 H1097Z"/></clipPath></defs>
<path d="M42 318 H750 L1097 942 H42Z" fill="#f3bd44"/>
<path d="M770 352 H1802 V942 H1097Z" fill="#0d0b20"/>
<path d="M320 936 H1097 V946 H320Z" fill="#2a1a10"/>
<g clip-path="url(#phc)">
<path d="M850 430 L880 425 L965 585 L935 590Z" fill="#7a6a62"/><path d="M985 420 H1010 V585 H985Z" fill="#3a2a5a"/><path d="M1012 405 H1060 V585 H1012Z" fill="#4a3070"/><path d="M1062 430 H1090 V585 H1062Z" fill="#2a1f4a"/>
<path d="M1100 405 H1140 V585 H1100Z" fill="#6a5a52"/><path d="M1142 395 H1200 V585 H1142Z" fill="#8a7868"/><path d="M1160 400 H1185 V585 H1160Z" fill="#b8a690"/><path d="M1202 400 H1240 V585 H1202Z" fill="#1e1a3e"/>
<path d="M1242 410 H1275 V585 H1242Z" fill="#2c2850"/><path d="M1280 380 L1310 378 L1340 560 L1312 565Z" fill="#9a8a7a"/><path d="M1345 395 H1390 V575 H1345Z" fill="#3a3260"/><path d="M1395 385 H1430 V560 H1395Z" fill="#55486a"/>
<path d="M1440 400 H1480 V540 H1440Z" fill="#2a2448"/><path d="M1485 410 L1505 405 L1540 520 L1520 530Z" fill="#7a6e78"/><path d="M1545 380 H1610 V520 H1545Z" fill="#1a1634"/>
<path d="M1618 352 H1662 V530 H1618Z" fill="#8a4a2c"/><path d="M1690 352 H1802 V942 H1690Z" fill="#8592aa"/><path d="M1730 352 H1775 V942 H1730Z" fill="#a9b6c8" opacity=".7"/>
<path d="M915 592 L1400 565 V600 L940 625Z" fill="#5a2a30"/>
<path d="M1010 690 H1030 V900 H1010Z" fill="#3a3458"/><path d="M1040 740 H1080 V900 H1040Z" fill="#2a2a55"/><path d="M1095 735 H1160 V900 H1095Z" fill="#8e7c6c"/><path d="M1120 740 H1145 V900 H1120Z" fill="#c2b09a"/>
<path d="M1175 730 H1235 V900 H1175Z" fill="#9a8676"/><path d="M1195 735 H1218 V900 H1195Z" fill="#cdbba6"/><path d="M1250 740 H1300 V900 H1250Z" fill="#2b2b3e"/><path d="M1305 750 H1345 V900 H1305Z" fill="#3d3a4a"/>
<path d="M1140 895 L1460 880 L1802 905 V942 H1140Z" fill="#6b4630"/><path d="M1140 895 L1450 882 L1460 915 L1150 930Z" fill="#b9b2a6"/><path d="M1200 905 H1420 V925 H1200Z" fill="#2e2a2a" opacity=".6"/>
</g>
<g>
<path d="M1325 715 L1440 515 L1690 545 L1800 625 L1745 905 L1500 830 L1350 790Z" fill="#14101c"/>
<path d="M1415 535 L1450 505 L1512 515 L1478 562Z" fill="#f4f4f8"/>
<path d="M1390 585 L1440 600 L1415 655 L1370 635Z" fill="#2a2aa0"/><path d="M1455 600 L1525 620 L1505 690 L1440 668Z" fill="#1d8a78"/>
<path d="M1345 655 L1422 668 L1395 722 L1330 712Z" fill="#f1d31e"/><path d="M1445 700 L1520 725 L1500 795 L1432 765Z" fill="#7a1420"/>
<path d="M1362 745 L1422 760 L1410 795 L1355 780Z" fill="#1f7a62"/><path d="M1385 800 L1480 815 L1470 880 L1380 850Z" fill="#7a141c"/>
<path d="M1575 545 L1655 535 L1648 615 L1568 625Z" fill="#1f9a86"/><path d="M1672 552 L1716 585 L1706 648 L1662 620Z" fill="#f05a22"/><path d="M1722 592 L1760 622 L1750 678 L1712 652Z" fill="#1f8a62"/><path d="M1766 630 L1796 655 L1786 705 L1756 685Z" fill="#c01a22"/>
<path d="M1545 640 L1632 632 L1622 722 L1535 730Z" fill="#1f9a86"/><path d="M1646 652 L1702 685 L1692 752 L1636 722Z" fill="#c81828"/><path d="M1700 695 L1742 722 L1732 785 L1690 760Z" fill="#2a3cc0"/><path d="M1746 722 L1780 745 L1770 802 L1736 782Z" fill="#f0d21e"/>
<path d="M1515 740 L1605 745 L1592 832 L1505 815Z" fill="#f2f2f6"/><path d="M1616 758 L1668 782 L1658 852 L1606 832Z" fill="#1f9a7a"/><path d="M1668 790 L1712 812 L1702 880 L1658 858Z" fill="#f05a22"/><path d="M1716 815 L1752 835 L1742 897 L1706 880Z" fill="#f2f2f6"/>
</g>
<path d="M1628 38 V155 H1802 M1695 38 V208 H1480" fill="none" stroke="#eeb43c" stroke-width="9"/>
<path d="M42 1155 H252 V1352 M520 1255 H150 V1352" fill="none" stroke="#eeb43c" stroke-width="9"/>
</svg>
<div class="j" style="left:30px;top:392px;width:642px;font-size:49px;color:#2e2108;line-height:60px">古风生活体验交流网</div>
<div class="j" style="left:30px;top:461px;width:493px;font-size:49px;color:#2e2108;line-height:60px">站的设计与实现</div>
<div class="t" style="left:545px;top:461px;font-size:49px;color:#2e2108;line-height:60px;letter-spacing:16px">PPT</div>

</div></div>
<div class="a th" style="top:485px"><div class="sl">
<div class="t" style="left:559px;top:70px;font-size:84px;font-weight:bold;color:#966a10;line-height:100px;-webkit-text-stroke:2.4px #966a10;width:84px;overflow:hidden">摘</div>
<div class="t" style="left:741px;top:70px;font-size:84px;font-weight:bold;color:#966a10;line-height:100px;-webkit-text-stroke:2.4px #966a10;width:84px;overflow:hidden">要</div>
<div class="a b2" style="top:253px"></div><div class="a b2" style="top:522px"></div><div class="a b2" style="top:646px"></div>
<div class="j t2" style="top:234px">二十一世纪我们的社会进入了信息时代，信息管理系统的建立，大大提高了人</div>
<div class="j t2" style="top:281.8px">们信息化水平。传统的管理方式对时间、地点的限制太多，而在线管理系统刚</div>
<div class="j t2" style="top:329.6px">好能满足这些需求，在线管理系统突破了传统管理方式的局限性。于是本文针</div>
<div class="j t2" style="top:377.4px;width:1130px">对这一需求设计并实现了一个基于springboot古风生活体验交流网站，为了</div>
<div class="j t2" style="top:425.2px;width:490px">简捷并有效的解决各方面的问题。</div>
<div class="j t2" style="top:503px">本文讲述了古风生活体验交流网站。结合电子管理系统的特点，分析了古风生</div>
<div class="j t2" style="top:550.8px;width:1062px">活体验交流网站的背景，给出了古风生活体验交流网站实现的设计方案。</div>
<div class="j t2" style="top:627.5px">本论文主要完成不同用户的权限划分，不同用户具有不同权限的操作功能，在</div>
<div class="j t2" style="top:675.3px">用户模块，主要有用户进行注册和登录，用户可以实现查看汉服文化、汉服服</div>
<div class="j t2" style="top:723.1px">装、交流论坛，还能修改个人信息等；在管理员模块，管理员可以对用户、朝</div>
<div class="j t2" style="top:770.9px">代信息、汉服文化、汉服服装、服装类别、论坛分类、交流论坛等进行相应的</div>
<div class="j t2" style="top:818.7px;width:85px">操作。</div>
<div class="j t2" style="top:892.5px;width:795px">关键词：古风生活体验交流网站；springboot框架 ；</div>
<svg width="113" height="180" style="left:0;top:870px"><use href="#ch1"/></svg>
<svg width="118" height="180" style="left:1273px;top:870px"><use href="#ch2"/></svg>


</div></div>
<div class="a th" style="top:714.5px"><div class="sl">
<div class="j" style="left:517px;top:68px;width:352px;font-size:87px;font-weight:bold;color:#966a10;line-height:106px;-webkit-text-stroke:2.4px #966a10">课题背景</div>
<div class="a" style="left:113px;top:289px;width:9px;height:9px;background:#5b84d6"></div>
<div class="j t3" style="top:258px">21世纪以来，随着科学技术的飞速发展，人们对信息</div>
<div class="j t3" style="top:330.2px">的要求越来越高，于是传统的信息技术越来越难以满</div>
<div class="j t3" style="top:402.4px">足人们的要求。古风生活体验交流网站通过计算机技</div>
<div class="j t3" style="top:474.6px">术进行信息管理，完善平台与用户之间的关系，有助</div>
<div class="j t3" style="top:546.8px">于提高工作效率，实现信息化管理[1]。此次设计的系</div>
<div class="j t3" style="top:619px">统不仅利于管理员总体负责整体系统的运行维护，统</div>
<div class="j t3" style="top:691.2px">筹协调，同时也方便用户随时查询汉服文化、汉服服</div>
<div class="j t3" style="top:763.4px">装等，古风生活体验交流网站的开发很好地解决了这</div>
<div class="j t3" style="top:835.6px;width:1060px">一问题，同时也为用户提供方便的信息获取渠道。</div>
<svg width="113" height="180" style="left:0;top:870px"><use href="#ch1"/></svg>
<svg width="118" height="180" style="left:1273px;top:870px"><use href="#ch2"/></svg>


</div></div>
<div class="a" style="left:55px;top:942px;width:282.8px;height:213px;border:2px solid #c8651c;border-radius:5px"></div>
<div class="a th" style="top:944px;box-shadow:none;border-radius:2px"><div class="sl">
<div class="j" style="left:366.5px;top:70.5px;width:703px;font-size:83px;font-weight:bold;color:#966a10;line-height:106px;-webkit-text-stroke:1.9px #966a10">选题的目的与意义</div>
<div class="a" style="left:88px;top:204.5px;width:9px;height:9px;background:#5b84d6"></div>
<div class="j bt" style="top:187.3px">本文研究的目标是通过对各种功能单元进行最优的整合，从而达到对各种管理</div>
<div class="j bt" style="top:235.5px">的具体要求，从而最大限度地提高本行业的自动化和信息化水平，从而使得古</div>
<div class="j bt" style="top:283.7px">风生活体验交流网站更清楚、更透明。操作简单，管理方便，可以实现自动检</div>
<div class="j bt" style="top:331.9px">测，减少了古风生活体验交流网站的错误。古风生活体验交流网站最大的特色</div>
<div class="j bt" style="top:380.1px">在于信息的处理，因为它涉及到大量的信息，而且涉及到的各种类型和复杂的</div>
<div class="j bt" style="top:428.3px">管理，使得整个过程更加的繁琐。它们之间的联系很复杂，而且数据的检索和</div>
<div class="j bt" style="top:476.5px">分析方式也很复杂。在以往的传统古风生活体验交流网站中，以上各项工作都</div>
<div class="j bt" style="top:524.7px">是非常繁杂和繁琐的。由于在进行数据的加工时，往往会发生信息的反复传输</div>
<div class="j bt" style="top:572.9px">和丢失，所以必须引进电脑进行信息的管理，以达到改善工作者管理工作的效</div>
<div class="j bt" style="top:621.1px;width:67.6px">果。</div>
<svg width="113" height="180" style="left:0;top:870px"><use href="#ch1"/></svg>
<svg width="118" height="180" style="left:1273px;top:870px"><use href="#ch2"/></svg>


</div></div>
<div class="a th" style="top:1173px;height:127px;border-radius:3px 3px 0 0"><div class="sl">
<div class="j" style="left:208px;top:64px;width:972px;font-size:86px;font-weight:bold;color:#8a6a12;line-height:106px;-webkit-text-stroke:2.4px #8a6a12">初步设计方法与实施方案</div>
<div class="a b2" style="left:123px;top:228px"></div><div class="a b2" style="left:123px;top:447px"></div>
<div class="j t5" style="top:209px">软件体系结构方案：由于本系统需要在不同设备上都能运行，而且电脑配置要</div>
<div class="j t5" style="top:257.4px">求也要越低越好，为了实现这一要求，经过考虑B/S架构成为最佳之选。使用</div>
<div class="j t5" style="top:305.8px">B/S架构的系统可以几乎在任何电脑上运行，只要浏览器可以正常工作就可以</div>
<div class="j t5" style="top:354.2px;width:960px">正常运行该系统，而且后期维护及二次修改较为容易，符合要求。</div>
<div class="j t5" style="top:428px">操作系统方案：Windows10操作系统，该系统是目前微软公司推出的最新系</div>
<div class="j t5" style="top:476.4px">统，目前大多数市面上的电脑都使用该系统，并且该系统功能完善，兼容性好</div>
<div class="j t5" style="top:524.8px;width:1120px">。开发工具：选用 Eclipse，Java开发语言springboot框架，MySQL数据</div>
<div class="j t5" style="top:573.2px;width:60px">库。</div>

</div></div>
<svg width="20" height="20" viewBox="0 0 20 20" style="left:178px;top:1315px"><path d="M10 1 V19 M1 10 H19" stroke="#222" stroke-width="1.8" fill="none"/></svg>

<!-- main editing area -->
<div class="a" style="left:375px;top:184px;width:1px;height:1177px;background:#d3dbd9"></div>
<div class="a" style="left:537px;top:188px;width:35px;height:34px;background:#fff;border-radius:5px;box-shadow:0 0 2px rgba(0,0,0,.12)">
<svg width="22" height="18" viewBox="0 0 22 18" style="left:7px;top:8px"><defs><linearGradient id="ai1" x1="0" y1="1" x2="1" y2="0"><stop offset="0" stop-color="#3f8cf5"/><stop offset=".5" stop-color="#5a4be8"/><stop offset="1" stop-color="#7a3df0"/></linearGradient><linearGradient id="ai2" x1="0" y1="0" x2="1" y2="1"><stop offset="0" stop-color="#a04bf0"/><stop offset="1" stop-color="#ff4f9a"/></linearGradient></defs><path d="M1 16 L9 1 H15 L7 16Z" fill="url(#ai1)"/><path d="M10 8 H15.5 L20.5 16 H14.5Z" fill="url(#ai2)"/></svg>
</div>
<div id="slide" class="a" style="left:537px;top:230px;width:1392px;height:1044px;background:#fff;box-shadow:0 0 0 1px rgba(0,0,0,.13),2px 2px 5px rgba(0,0,0,.12)">
<div class="j" style="left:366.5px;top:70.5px;width:703px;font-size:83px;font-weight:bold;color:#966a10;line-height:106px;-webkit-text-stroke:1.9px #966a10">选题的目的与意义</div>
<div class="a" style="left:88px;top:204.5px;width:9px;height:9px;background:#5b84d6"></div>
<div class="j bt" style="top:187.3px">本文研究的目标是通过对各种功能单元进行最优的整合，从而达到对各种管理</div>
<div class="j bt" style="top:235.5px">的具体要求，从而最大限度地提高本行业的自动化和信息化水平，从而使得古</div>
<div class="j bt" style="top:283.7px">风生活体验交流网站更清楚、更透明。操作简单，管理方便，可以实现自动检</div>
<div class="j bt" style="top:331.9px">测，减少了古风生活体验交流网站的错误。古风生活体验交流网站最大的特色</div>
<div class="j bt" style="top:380.1px">在于信息的处理，因为它涉及到大量的信息，而且涉及到的各种类型和复杂的</div>
<div class="j bt" style="top:428.3px">管理，使得整个过程更加的繁琐。它们之间的联系很复杂，而且数据的检索和</div>
<div class="j bt" style="top:476.5px">分析方式也很复杂。在以往的传统古风生活体验交流网站中，以上各项工作都</div>
<div class="j bt" style="top:524.7px">是非常繁杂和繁琐的。由于在进行数据的加工时，往往会发生信息的反复传输</div>
<div class="j bt" style="top:572.9px">和丢失，所以必须引进电脑进行信息的管理，以达到改善工作者管理工作的效</div>
<div class="j bt" style="top:621.1px;width:67.6px">果。</div>
<svg width="113" height="180" style="left:0;top:870px"><use href="#ch1"/></svg>
<svg width="118" height="180" style="left:1273px;top:870px"><use href="#ch2"/></svg>


</div>

<!-- right property panel -->
<div class="a" style="left:2163.7px;top:184px;width:1px;height:1177px;background:#d3dbd9"></div>
<div class="a" style="left:2489.7px;top:184px;width:1px;height:1177px;background:#d3dbd9"></div>
<svg width="17" height="17" viewBox="0 0 17 17" style="left:2412.5px;top:206px"><path class="s" d="M9.6 1.2 L15.8 7.4 L14.4 8.2 L12.4 8 L9.6 10.8 L9.4 13.6 L8.2 14.4 L2.6 8.8 L3.4 7.6 L6.2 7.4 L9 4.6 L8.8 2.6Z M5.4 11.6 L1.2 15.8" style="stroke-width:1.4"/></svg>
<svg width="14" height="14" viewBox="0 0 14 14" style="left:2448px;top:207.5px"><path d="M1 1 L13 13 M13 1 L1 13" stroke="#333" stroke-width="1.5" fill="none"/></svg>
<div class="a cb" style="left:2310px;top:297px"></div>
<svg width="12" height="7" viewBox="0 0 12 7" style="left:2449.5px;top:308px"><path d="M1 1 L6 6 L11 1" stroke="#444" stroke-width="1.4" fill="none"/></svg>
<div class="a" style="left:2303px;top:353px;width:6px;height:18px;overflow:hidden"><div class="t" style="left:-1px;top:0;font-size:15px;color:#262626;line-height:18px">)</div></div>
<div class="a rd" style="left:2206.5px;top:392px"></div>
<div class="j rp" style="left:2229.5px;top:391px;width:60.5px">渐变填充</div><div class="t rp" style="left:2290px;top:391px">(<u>G</u>)</div>
<div class="a rd" style="left:2206.5px;top:431px"></div>
<div class="j rp" style="left:2229.5px;top:430px;width:105.5px">图片或纹理填充</div><div class="t rp" style="left:2335px;top:430px">(<u>P</u>)</div>
<div class="a rd" style="left:2206.5px;top:470px"></div>
<div class="j rp" style="left:2229.5px;top:469px;width:60.5px">图案填充</div><div class="t rp" style="left:2290px;top:469px">(<u>A</u>)</div>
<div class="a rd" style="left:2206.5px;top:509px;border-radius:3px;background:rgba(255,255,255,.75)"></div>
<div class="j rp" style="left:2229.5px;top:508px;width:90.5px">隐藏背景图形</div><div class="t rp" style="left:2320px;top:508px">(<u>H</u>)</div>
<div class="j rp" style="left:2200px;top:548px;width:30.5px">颜色</div><div class="t rp" style="left:2230.5px;top:548px">(<u>C</u>)</div>
<div class="a cb" style="left:2310px;top:543px"></div>
<svg width="12" height="7" viewBox="0 0 12 7" style="left:2449.5px;top:554px"><path d="M1 1 L6 6 L11 1" stroke="#444" stroke-width="1.4" fill="none"/></svg>
<div class="j rp" style="left:2200px;top:588px;width:45.5px">透明度</div><div class="t rp" style="left:2245.5px;top:588px">(<u>T</u>)</div>
<div class="a" style="left:2285px;top:596.5px;width:73px;height:1.5px;background:#c9cfce"></div>
<div class="a" style="left:2277px;top:589px;width:17px;height:17px;border-radius:50%;background:#fff;border:1px solid #c8c8c8;box-shadow:0 0 2px rgba(0,0,0,.15)"></div>
<div class="a" style="left:2281px;top:593px;width:9px;height:9px;border-radius:50%;background:#8e8e8e"></div>
<div class="a cb" style="left:2364.5px;top:583px;width:106px"></div>
<div class="t rp" style="left:2376px;top:588px">0</div>
<div class="t rp" style="left:2431px;top:588px">%</div>
<svg width="9" height="5" viewBox="0 0 9 5" style="left:2454.5px;top:588.5px"><path d="M1 4 L4.5 1 L8 4" stroke="#555" stroke-width="1.1" fill="none"/></svg>
<svg width="9" height="5" viewBox="0 0 9 5" style="left:2454.5px;top:601.5px"><path d="M1 1 L4.5 4 L8 1" stroke="#555" stroke-width="1.1" fill="none"/></svg>
<div class="a bn" style="left:2185.5px;top:1316.5px;width:73.5px"></div>
<div class="j rp" style="left:2192px;top:1320.5px;width:60.5px">全部应用</div>
<div class="a bn" style="left:2269.5px;top:1316.5px;width:74px"></div>
<div class="j rp" style="left:2276.5px;top:1320.5px;width:60.5px">重置背景</div>

<!-- right icon sidebar -->
<svg width="16" height="2" viewBox="0 0 16 2" style="left:2517px;top:214px"><path d="M0.5 1 H15.5" stroke="#8a9492" stroke-width="1.4" fill="none"/></svg>
<div class="a" style="left:2503px;top:235.5px;width:44px;height:54px;border-radius:7px;background:#cbdad8"></div>
<svg width="20" height="18" viewBox="0 0 20 18" style="left:2514.5px;top:242px"><path class="s" d="M1 4.4 H2 M8 4.4 H19 M1 13.6 H12 M18 13.6 H19"/><circle class="s" cx="5" cy="4.4" r="3"/><circle class="s" cx="15" cy="13.6" r="3"/></svg>
<div class="j sb" style="top:263.5px">属性</div>
<svg width="21" height="20" viewBox="0 0 21 20" style="left:2514px;top:305.5px"><path class="s" d="M7.2 16.8 L6.4 18.6 L11 16.2 L16.4 19 L15.4 13 L19.8 8.8 L13.8 7.8 L11 2.4 L8.2 7.8 L5.4 8.2 M1.4 12 H8 M2.8 15.2 H7"/></svg>
<div class="j sb" style="top:328.5px">动画</div>
<svg width="20" height="20" viewBox="0 0 20 20" style="left:2514.5px;top:370px"><path class="s" d="M7 11.4 H3 C1.8 11.4 1 10.6 1 9.4 V3 C1 1.8 1.8 1 3 1 H11.4 C12.6 1 13.4 1.8 13.4 3 V6"/><path class="s" d="M13 19 H17 C18.2 19 19 18.2 19 17 V10.4 C19 9.2 18.2 8.4 17 8.4 H9 C7.8 8.4 7 9.2 7 10.4 V13"/><path class="s" d="M5 15 L7.2 17.6 L9.6 15 M7.2 17.4 V14"/></svg>
<div class="j sb" style="top:393.5px">切换</div>
<svg width="20" height="20" viewBox="0 0 20 20" style="left:2514.5px;top:435.5px"><path class="s" d="M6.6 3.4 L16.6 13.4 L13.4 16.6 L3.4 6.6Z M9.6 6.4 L6.4 9.6"/><path class="s" d="M16 0.8 L16.8 3.2 L19.2 4 L16.8 4.8 L16 7.2 L15.2 4.8 L12.8 4 L15.2 3.2Z M4 11.6 L4.7 13.3 L6.4 14 L4.7 14.7 L4 16.4 L3.3 14.7 L1.6 14 L3.3 13.3Z" style="stroke-width:1.1"/></svg>
<div class="j sb" style="top:458.5px">美化</div>
<svg width="21" height="20" viewBox="0 0 21 20" style="left:2514px;top:501.5px"><path class="s" d="M7 1.4 C7.6 3 9 3.8 10.5 3.8 C12 3.8 13.4 3 14 1.4 L19.8 4.4 L18 8.6 L15.6 7.8 V11 M10 18.6 H5.4 V7.8 L3 8.6 L1.2 4.4 L7 1.4"/><path class="s" d="M15.4 11.8 L16.4 14.2 L19 14.6 L17.2 16.4 L17.6 19 L15.4 17.8 L13.2 19 L13.6 16.4 L11.8 14.6 L14.4 14.2Z" style="stroke-width:1.2"/></svg>
<div class="j sb" style="top:523.5px">主题</div>
<svg width="21" height="20" viewBox="0 0 21 20" style="left:2514px;top:566.5px"><path class="s" d="M6.4 18.6 H4 C2.4 18.6 1.4 17.6 1.4 16 V7.4 C1.4 3.8 4 1.4 7.6 1.4 H13.4 C17 1.4 19.6 3.8 19.6 7.4 V9 M6.4 18.6 V12"/><path class="s" d="M10 18.4 C8.6 15.4 9.4 12 12 9.6 C13.6 12.8 13 16 10 18.4Z M12.4 18.6 C13.2 15.6 15.4 13.4 19 12.6 C18.8 16.2 16.4 18.4 12.4 18.6Z" style="stroke-width:1.2"/></svg>
<div class="j sb" style="top:588.5px">素材</div>
<svg width="21" height="21" viewBox="0 0 21 21" style="left:2514px;top:630.5px"><path class="s" d="M8 16.6 L1.2 18.4 V3.6 L8 1.6 L13.6 3.6 L19.4 1.8 V9 M8 1.8 V10"/><circle class="s" cx="14" cy="14" r="4.2"/><path class="s" d="M17.2 17.2 L20 20"/></svg>
<div class="j sb" style="top:653.5px">文库</div>
<svg width="20" height="20" viewBox="0 0 20 20" style="left:2514.5px;top:696px"><circle class="s" cx="10" cy="10" r="9"/><path class="s" d="M7.2 7.8 C7.2 6 8.4 5 10 5 C11.6 5 12.8 6 12.8 7.6 C12.8 9.6 10 9.8 10 12.2"/><circle cx="10" cy="14.8" r="1" fill="#333"/></svg>
<div class="j sb" style="top:718.5px">帮助</div>
<svg width="20" height="18" viewBox="0 0 20 18" style="left:2514.5px;top:762px"><path class="s" d="M3 1 H17 C18.2 1 19 1.8 19 3 V11.4 C19 12.6 18.2 13.4 17 13.4 H7 L3.4 16.6 V13.4 H3 C1.8 13.4 1 12.6 1 11.4 V3 C1 1.8 1.8 1 3 1Z"/></svg>
<div class="a" style="left:2510px;top:784px;width:30px;height:5px;overflow:hidden"><div class="j sb" style="left:0;top:0;width:30px">反馈</div></div>
<div class="a" style="left:2480.5px;top:787px;width:76.5px;height:32px;border-radius:7px;background:#050505;box-shadow:0 0 3px rgba(0,0,0,.4)"></div>
<div class="t" style="left:2487px;top:794px;font-size:15.5px;color:#f2f2f2;line-height:18px;letter-spacing:.2px">CH</div>
<svg width="14" height="15" viewBox="0 0 14 15" style="left:2513px;top:795.5px"><path d="M7.6 1.2 C11 1.8 12.8 4.4 12.6 7.6 C12.4 11 9.8 13.6 6.4 13.6 C4 13.6 2 12.4 1.2 10.4 C4.4 11.2 7.4 9.2 7.6 5.6Z" fill="none" stroke="#ddd" stroke-width="1.4" stroke-linejoin="round"/></svg>
<div class="t" style="left:2533.5px;top:794px;font-size:15px;color:#d8d8d8;line-height:18px;width:16px;overflow:hidden">简</div>
<svg width="21" height="6" viewBox="0 0 21 6" style="left:2514px;top:832px"><circle cx="3" cy="3" r="1.9" class="s" style="stroke-width:1.2"/><circle cx="10.5" cy="3" r="1.9" class="s" style="stroke-width:1.2"/><circle cx="18" cy="3" r="1.9" class="s" style="stroke-width:1.2"/></svg>
<div class="j sb" style="top:848.5px">设置</div>

<!-- blue popup -->
<svg width="16" height="10" viewBox="0 0 16 10" style="left:2232.5px;top:196.5px"><path d="M0 10 L6.8 0.8 Q8 -0.4 9.2 0.8 L16 10Z" fill="#1f67e0"/></svg>
<div class="a" style="left:1867px;top:206px;width:438px;height:184.5px;border-radius:7px;background:#1f67e0;box-shadow:0 2px 8px rgba(0,40,120,.25)"></div>
<svg width="27" height="24" viewBox="0 0 27 24" style="left:1888px;top:228px"><circle cx="13.5" cy="12" r="6" fill="#fdb94a"/><path d="M10.6 19.4 H16.4 V20.6 C16.4 21.8 15.4 22.6 13.5 22.6 C11.6 22.6 10.6 21.8 10.6 20.6Z" fill="#dfe8f8"/><path d="M13.5 0.8 V3.4 M4.6 4.4 L6.4 6.2 M22.4 4.4 L20.6 6.2 M0.8 12.6 H3.8 M23.2 12.6 H26.2" stroke="#fdb94a" stroke-width="1.8" stroke-linecap="round" fill="none"/></svg>
<div class="j" style="left:1930.5px;top:229px;width:171px;font-size:17px;font-weight:bold;color:#fff;line-height:23px;-webkit-text-stroke:.35px #fff">云文档问答助手上线啦</div>
<div class="t" style="left:2102px;top:229px;font-size:17px;font-weight:bold;color:#fff;line-height:23px">!</div>
<svg width="13" height="13" viewBox="0 0 13 13" style="left:2265.5px;top:235px"><path d="M1 1 L12 12 M12 1 L1 12" stroke="#fff" stroke-width="1.6" fill="none"/></svg>
<div class="j" style="left:1888.5px;top:273.5px;width:392px;font-size:17px;color:#fff;line-height:23px">帮你快速从自己的云文档中找答案，不用打开文档查</div>
<div class="t" style="left:1888.5px;top:296.5px;font-size:17px;color:#fff;line-height:23px;width:17px;overflow:hidden">看</div>
<div class="a" style="left:2173px;top:334px;width:109.5px;height:40px;border-radius:6px;background:#fff"></div>
<div class="j" style="left:2194px;top:342.5px;width:68.5px;font-size:17px;color:#1f1f1f;line-height:23px">立即体验</div>

<!-- main area scrollbar -->
<svg width="8" height="6" viewBox="0 0 8 6" style="left:2149.5px;top:192px"><path d="M0 6 L4 0 L8 6Z" fill="#6e7675"/></svg>
<div class="a" style="left:2149px;top:470px;width:9.5px;height:86px;border-radius:4px;background:#d3d6d5"></div>
<svg width="8" height="5" viewBox="0 0 8 5" style="left:2149.5px;top:1261px"><path d="M0 0 L4 5 L8 0Z" fill="#6e7675"/></svg>
<svg width="8" height="10" viewBox="0 0 8 10" style="left:2149.5px;top:1278px"><path d="M0 5 L4 0 L8 5Z M0 10 L4 5.4 L8 10Z" fill="#6e7675"/></svg>
<svg width="8" height="10" viewBox="0 0 8 10" style="left:2149.5px;top:1298px"><path d="M0 0 L4 4.6 L8 0Z M0 5 L4 10 L8 5Z" fill="#6e7675"/></svg>
<!-- notes bar -->
<div class="a" style="left:376px;top:1319px;width:1788.5px;height:1px;background:#d9d6d3"></div>
<div class="j" style="left:388px;top:1327px;width:133px;font-size:16.45px;color:#8b8b8b;line-height:23px">单击此处添加备注</div>
<div class="a" style="left:527.5px;top:1323px;width:105px;height:30.5px;border-radius:4px;background:#f4f1ee;border:1px solid #dddad7"></div>
<svg width="17" height="16" viewBox="0 0 17 16" style="left:534.5px;top:1330px"><path d="M9 11 H1 V1 H14.4 V6 M4 4.4 H11 M4 7.6 H8" stroke="#8a8a8a" stroke-width="1.3" fill="none" stroke-linejoin="round"/><path d="M12.4 7.4 C12.8 9.6 13.6 10.4 16 11 C13.6 11.6 12.8 12.4 12.4 14.8 C12 12.4 11.2 11.6 8.8 11 C11.2 10.4 12 9.6 12.4 7.4Z" fill="#fff" stroke="#9a6be8" stroke-width="1.2" stroke-linejoin="round"/></svg>
<div class="t" style="left:556.5px;top:1327px;font-size:16.5px;color:#666;line-height:23px">AI</div>
<div class="j" style="left:576.5px;top:1327px;width:49px;font-size:16px;color:#666;line-height:23px">演讲稿</div>
<!-- status bar -->
<div class="a" style="left:0;top:1360.5px;width:2560px;height:1px;background:#dcd8d4"></div>
<div class="j st" style="left:17px;width:45.5px">幻灯片</div><div class="t st" style="left:66.5px;font-size:15.5px;letter-spacing:0">4 / 12</div>
<div class="sep" style="left:116px;top:1367px;height:17px;background:#d6d2ce"></div>
<svg width="18" height="18" viewBox="0 0 18 18" style="left:134.5px;top:1366.5px"><path class="s" d="M6 1.2 C6.4 2.4 7.6 3.2 9 3.2 C10.4 3.2 11.6 2.4 12 1.2 L16.8 3.8 L15.4 7.2 L13.4 6.6 V9 M8.4 16.4 H4.6 V6.6 L2.6 7.2 L1.2 3.8 L6 1.2" style="stroke-width:1.3"/><path class="s" d="M13.2 9.8 L14 12 L16.4 12.2 L14.6 13.8 L15.2 16.2 L13.2 15 L11.2 16.2 L11.8 13.8 L10 12.2 L12.4 12Z" style="stroke-width:1.1"/></svg>
<div class="t st" style="left:159.5px;font-size:16px">3_Office</div><div class="j st" style="left:222px;width:30.5px">主题</div>
<div class="sep" style="left:269px;top:1367px;height:17px;background:#d6d2ce"></div>
<svg width="17" height="18" viewBox="0 0 17 18" style="left:288.5px;top:1366.5px"><path class="s" d="M7 16.6 H2.6 C1.6 16.6 1 16 1 15 V2.6 C1 1.6 1.6 1 2.6 1 H12.4 C13.4 1 14 1.6 14 2.6 V7 M4 5.2 L5.8 7 L9.4 3.4" style="stroke-width:1.3"/><circle class="s" cx="11" cy="12" r="3.6" style="stroke-width:1.3"/><path class="s" d="M13.6 14.8 L16 17.2" style="stroke-width:1.3"/></svg>
<div class="j st" style="left:312px;width:30.5px">校对</div>
<div class="sep" style="left:359px;top:1367px;height:17px;background:#d6d2ce"></div>
<svg width="16" height="15" viewBox="0 0 16 15" style="left:379px;top:1368px"><path d="M8 0.8 L15.4 13.6 C15.6 14.1 15.3 14.5 14.8 14.5 H1.2 C0.7 14.5 0.4 14.1 0.6 13.6Z" fill="#f5a623"/><path d="M8 5 V9.6" stroke="#7a3b00" stroke-width="1.6" stroke-linecap="round"/><circle cx="8" cy="12" r="1" fill="#7a3b00"/></svg>
<div class="j st" style="left:403px;width:60.5px">缺失字体</div>
<svg width="17" height="18" viewBox="0 0 17 18" style="left:1696.5px;top:1366.5px"><path class="s" d="M8.5 1 L15.6 4.4 V13 L8.5 16.8 L1.4 13 V7 M1.6 4.6 L8.5 8 L15.4 4.6 M8.5 8 V11 M1.4 4.4 L5 2.6" style="stroke-width:1.3"/></svg>
<div class="j st" style="left:1719.5px;width:60.5px">智能美化</div>
<svg class="cv" viewBox="0 0 8 5" style="left:1785.5px;top:1373.5px"><path d="M1.2 1.3L4 3.9L6.8 1.3" style="stroke-width:1.5"/></svg>
<div class="sep" style="left:1811px;top:1367px;height:17px;background:#d6d2ce"></div>
<svg width="16" height="14" viewBox="0 0 16 14" style="left:1831px;top:1369px"><path class="s" d="M1 1.4 H15 M1 7 H15 M1 12.6 H15 M5 1.4 L6.4 4 M11 1.4 L9.6 4" style="stroke-width:1.3"/></svg>
<div class="j st" style="left:1853px;width:30.5px">备注</div>
<svg class="cv" viewBox="0 0 8 5" style="left:1889px;top:1373.5px"><path d="M1.2 1.3L4 3.9L6.8 1.3" style="stroke-width:1.5"/></svg>
<svg width="18" height="17" viewBox="0 0 18 17" style="left:1922.5px;top:1367.5px"><path class="s" d="M10 12 H6.4 L3 15.4 V12 H1 V1 H15.6 V7 M14 9.6 V15.2 M11.2 12.4 H16.8" style="stroke-width:1.3"/></svg>
<div class="j st" style="left:1947px;width:30.5px">批注</div>
<div class="sep" style="left:1994px;top:1367px;height:17px;background:#d6d2ce"></div>
<div class="a" style="left:2006px;top:1362px;width:28.5px;height:24px;background:#d6d4d2"></div>
<svg width="18" height="14" viewBox="0 0 18 14" style="left:2011px;top:1368.5px"><rect class="s" x="1" y="1" width="16" height="12" rx="1" style="stroke-width:1.3"/><path class="s" d="M5.4 3.4 V10.6" style="stroke-width:1.3"/></svg>
<svg width="18" height="15" viewBox="0 0 18 15" style="left:2051px;top:1368px"><rect class="s" x="1" y="1" width="6" height="5" rx="1" style="stroke-width:1.3"/><rect class="s" x="11" y="1" width="6" height="5" rx="1" style="stroke-width:1.3"/><rect class="s" x="1" y="9" width="6" height="5" rx="1" style="stroke-width:1.3"/><rect class="s" x="11" y="9" width="6" height="5" rx="1" style="stroke-width:1.3"/></svg>
<svg width="18" height="15" viewBox="0 0 18 15" style="left:2091.5px;top:1368px"><path class="s" d="M9 3 C7 1.4 4 1 1 1.6 V12.6 C4 12 7 12.4 9 14 C11 12.4 14 12 17 12.6 V1.6 C14 1 11 1.4 9 3Z M9 3 V13.6" style="stroke-width:1.3"/></svg>
<div class="sep" style="left:2126px;top:1367px;height:17px;background:#d6d2ce"></div>
<div class="a" style="left:2138px;top:1363.5px;width:25.5px;height:25px;border-radius:4px;background:#e8641b"></div>
<svg width="10" height="12" viewBox="0 0 10 12" style="left:2147px;top:1369.5px"><path d="M1 1 L9 6 L1 11Z" fill="#fff"/></svg>
<svg class="cv" viewBox="0 0 8 5" style="left:2173px;top:1373.5px"><path d="M1.2 1.3L4 3.9L6.8 1.3" style="stroke-width:1.5"/></svg>
<div class="sep" style="left:2196px;top:1367px;height:17px;background:#d6d2ce"></div>
<svg width="18" height="17" viewBox="0 0 18 17" style="left:2213.5px;top:1366.5px"><path class="s" d="M1 5 V2.4 C1 1.6 1.6 1 2.4 1 H5 M13 1 H15.6 C16.4 1 17 1.6 17 2.4 V5 M17 12 V14.6 C17 15.4 16.4 16 15.6 16 H13 M5 16 H2.4 C1.6 16 1 15.4 1 14.6 V12" style="stroke-width:1.4"/><rect class="s" x="5.4" y="5" width="7.2" height="7" rx="1" style="stroke-width:1.4"/></svg>
<div class="t st" style="left:2257px;font-size:16px;letter-spacing:.2px">116%</div>
<svg class="cv" viewBox="0 0 8 5" style="left:2310px;top:1373.5px"><path d="M1.2 1.3L4 3.9L6.8 1.3" style="stroke-width:1.5"/></svg>
<div class="a" style="left:2340px;top:1375px;width:15.5px;height:2px;background:#222"></div>
<div class="a" style="left:2373px;top:1375px;width:68px;height:2px;background:#2f62d9"></div>
<div class="a" style="left:2441px;top:1375.5px;width:64px;height:1px;background:#c9c6c3"></div>
<div class="a" style="left:2436.5px;top:1371.5px;width:9px;height:9px;border-radius:50%;background:#fff;border:1px solid #b5b5b5"></div>
<div class="a" style="left:2439.5px;top:1374.5px;width:3px;height:3px;border-radius:50%;background:#9a9a9a"></div>
<svg width="14" height="14" viewBox="0 0 14 14" style="left:2522.5px;top:1369px"><path d="M7 0.5 V13.5 M0.5 7 H13.5" stroke="#222" stroke-width="2" fill="none"/></svg>

</body>
</html>
